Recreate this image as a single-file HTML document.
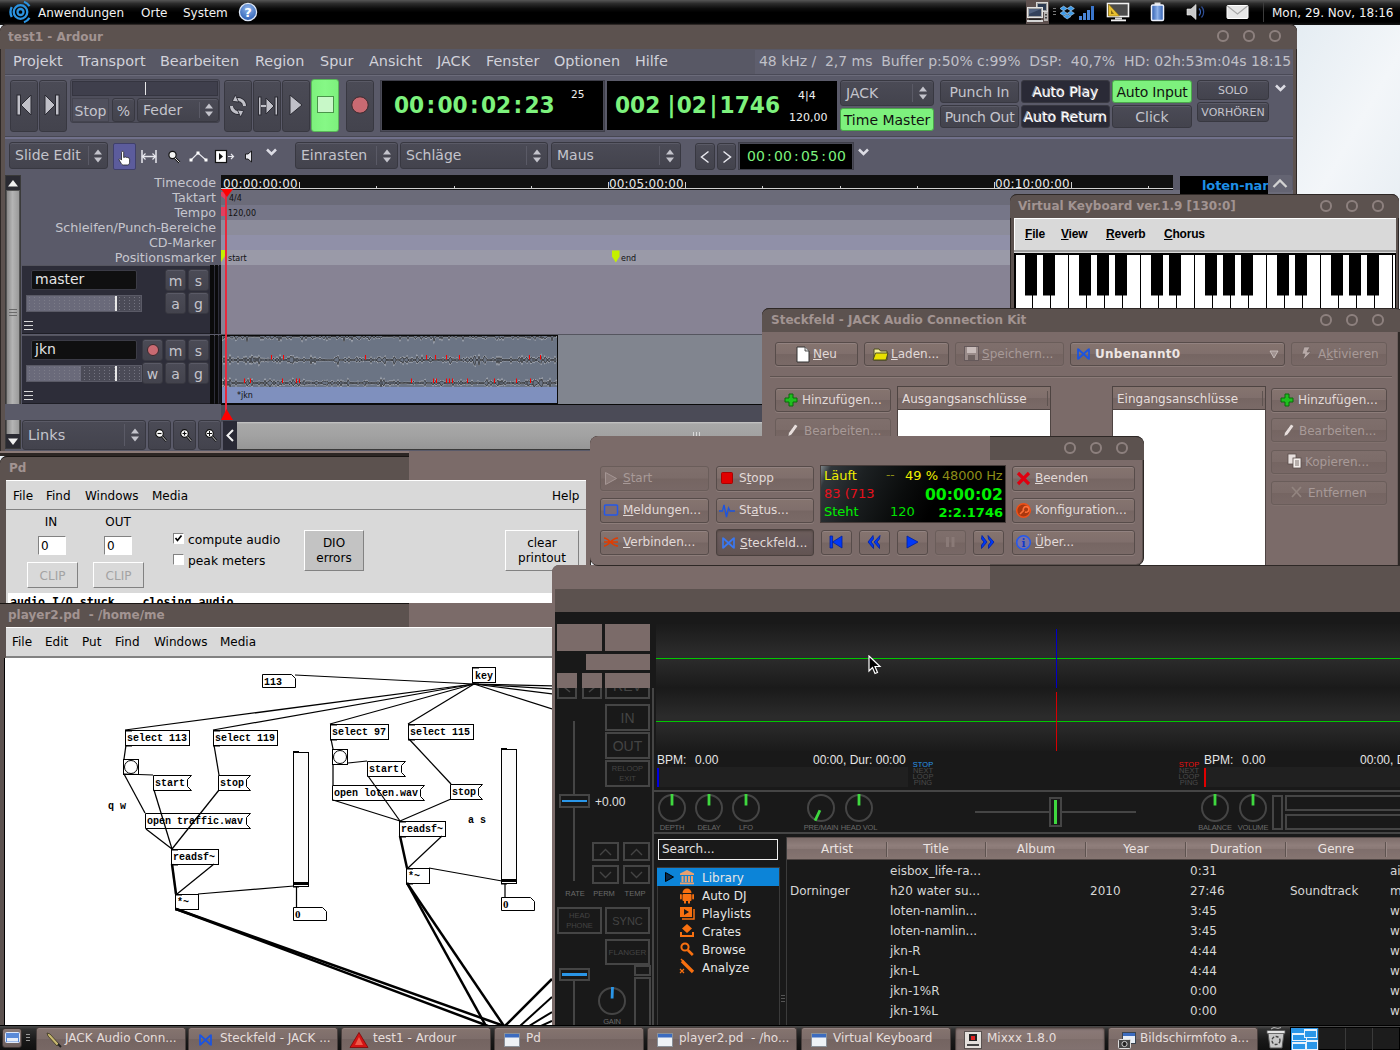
<!DOCTYPE html>
<html lang="de"><head><meta charset="utf-8"><title>Desktop</title><style>
html,body{margin:0;padding:0;}
body{width:1400px;height:1050px;position:relative;overflow:hidden;background:#e9eff4;font-family:"DejaVu Sans","Liberation Sans",sans-serif;font-size:12px;}
div,svg,span.a{position:absolute;box-sizing:border-box;white-space:nowrap;}
u{text-decoration:underline;}
.ab{background:linear-gradient(#4b4b56,#43434d);border:1px solid #383841;border-radius:3px;box-shadow:inset 0 1px 0 #5a5a66;color:#c4c4cc;text-align:center;font-size:14px;}
.ag{background:#7df17d;border:1px solid #4aa84a;border-radius:3px;color:#111;text-align:center;font-size:14px;}
.ad{background:#2a2a36;border:1px solid #383841;border-radius:3px;color:#fff;text-align:center;font-size:14px;text-shadow:-1px -1px 0 #9c9ca6;}
.qb{background:linear-gradient(#85746f 0%,#806f6c 48%,#766663 52%,#7a6a67 100%);border:1px solid #574c4a;border-radius:3px;box-shadow:0 1px 0 #8d7d7a,inset 0 1px 0 #928280;color:#e2dad8;font-size:12px;}
.qd{background:linear-gradient(#7f6f6c 0%,#7c6c69 48%,#756562 52%,#786866 100%);border:1px solid #6a5d5a;border-radius:3px;box-shadow:0 1px 0 #85757299;color:#a89a98;font-size:12px;}
.tk{background:linear-gradient(#85746f 0%,#7d6d6a 50%,#746461 52%,#786865 100%);border:1px solid #4a403e;border-radius:3px;box-shadow:inset 0 1px 0 #938381;color:#dcd4d2;font-size:12px;}
.vk{font-family:"Liberation Sans",sans-serif;font-weight:bold;font-size:12px;color:#000;letter-spacing:-.2px;}
.mx{font-family:"Liberation Sans",sans-serif;}
.mb{border:2px solid #454545;color:#4c4c4c;font-family:"Liberation Sans",sans-serif;text-align:center;}
.pd{border:1px solid #000;font-family:"DejaVu Sans Mono","Liberation Mono",monospace;font-weight:bold;font-size:10px;color:#000;background:#fff;}
</style></head><body>
<div style="left:1290px;top:24px;width:110px;height:175px;background:linear-gradient(120deg,#e4ecf2 0%,#f3f6f9 60%,#e9eff4 100%);"></div>
<div style="left:0px;top:0px;width:1400px;height:24.5px;background:linear-gradient(#565656 0%,#2c2c2c 14%,#0c0c0c 34%,#000 50%,#000 88%,#161616 100%);"></div>
<svg style="left:6.5px;top:0px" width="28" height="24" viewBox="0 0 28 24">
<circle cx="13.5" cy="12" r="3" fill="none" stroke="#2b93e0" stroke-width="2.3"/>
<circle cx="13.5" cy="12" r="6.8" fill="none" stroke="#2b93e0" stroke-width="2.3"/>
<path d="M4.8 7 A10.5 10.5 0 0 0 4.8 17" fill="none" stroke="#2b93e0" stroke-width="2.4"/>
<path d="M17 1.8 A10.8 10.8 0 0 1 22.5 6.2" fill="none" stroke="#2b93e0" stroke-width="2.2"/>
<path d="M22.5 17.8 A10.8 10.8 0 0 1 17 22.2" fill="none" stroke="#2b93e0" stroke-width="2.2"/>
</svg><div style="left:38px;top:0.5px;height:24px;line-height:24px;color:#f2f2f2;font-size:12px;">Anwendungen</div>
<div style="left:141px;top:0.5px;height:24px;line-height:24px;color:#f2f2f2;font-size:12px;">Orte</div>
<div style="left:183px;top:0.5px;height:24px;line-height:24px;color:#f2f2f2;font-size:12px;">System</div>
<svg style="left:238px;top:2px" width="20" height="20" viewBox="0 0 20 20">
<defs><radialGradient id="hg" cx="50%" cy="30%" r="70%"><stop offset="0" stop-color="#8fb4ea"/><stop offset="1" stop-color="#2c5fb5"/></radialGradient></defs>
<circle cx="10" cy="10" r="8.6" fill="url(#hg)" stroke="#dfe8f6" stroke-width="1.3"/>
<text x="10" y="14.8" font-family="DejaVu Sans, Liberation Sans, sans-serif" font-weight="bold" font-size="13" fill="#fff" text-anchor="middle">?</text></svg><svg style="left:1024px;top:0px" width="236" height="24" viewBox="0 0 236 24">
<!-- network monitors -->
<rect x="2" y="0" width="23" height="24" fill="#5d504e"/>
<rect x="12.5" y="2.5" width="11" height="9" fill="#9a9a9a" stroke="#d8d8d8" stroke-width="1"/>
<rect x="14" y="4" width="8" height="6" fill="#2c3a52"/>
<rect x="20" y="12" width="4" height="9" fill="#b8b4b2"/><rect x="21" y="14" width="2" height="1.5" fill="#444"/><rect x="21" y="17" width="2" height="1.5" fill="#444"/>
<rect x="3.5" y="7.5" width="15" height="10" fill="#a4a4a4" stroke="#e4e4e4" stroke-width="1"/>
<rect x="5" y="9" width="12" height="7" fill="#34425c"/><path d="M5 9h12l-12 5z" fill="#51617e"/>
<rect x="5" y="18.5" width="12" height="1.5" fill="#222"/><rect x="3" y="20" width="16" height="2" fill="#d4d4d4"/>
<!-- dots -->
<rect x="29" y="8" width="3" height="1" fill="#777"/><rect x="29" y="11" width="3" height="1" fill="#777"/><rect x="29" y="14" width="3" height="1" fill="#777"/>
<!-- dropbox -->
<path d="M36 8.5l3.6-2.4 3.6 2.4-3.6 2.4zM43.2 8.5l3.6-2.4 3.6 2.4-3.6 2.4zM36 13.3l3.6-2.4 3.6 2.4-3.6 2.4zM43.2 13.3l3.6-2.4 3.6 2.4-3.6 2.4zM39.6 16.6l3.6-2.3 3.6 2.3-3.6 2.3z" fill="#3d9ae8" stroke="#cfe6fb" stroke-width=".5"/>
<!-- signal -->
<rect x="55" y="16" width="3" height="4" fill="#4a86d8"/><rect x="59" y="13" width="3" height="7" fill="#4a86d8"/><rect x="63" y="10" width="3" height="10" fill="#4a86d8"/><rect x="67" y="6" width="3" height="14" fill="#3a76cc"/>
<!-- display -->
<rect x="83.5" y="3.5" width="21" height="13" fill="#4c4c4c" stroke="#f2f2f2" stroke-width="1.6"/>
<path d="M84.5 4l11 12h-11z" fill="#e8c030" stroke="#8a6c10" stroke-width=".6"/><path d="M87 10l3 4h-3z" fill="#8a6c10"/>
<rect x="91" y="17.5" width="7" height="2" fill="#d8d8d8"/><rect x="87" y="19.5" width="15" height="1.8" fill="#f0f0f0"/>
<!-- battery -->
<defs><linearGradient id="bg1" x1="0" x2="1" y1="0" y2="0"><stop offset="0" stop-color="#2c5cb0"/><stop offset=".5" stop-color="#8cb0e8"/><stop offset="1" stop-color="#2c5cb0"/></linearGradient></defs>
<rect x="130.5" y="2.5" width="6" height="3" fill="#e0e0e0"/><rect x="127.5" y="5" width="12" height="15.5" rx="1.2" fill="url(#bg1)" stroke="#eef2fc" stroke-width="1.5"/>
<!-- speaker -->
<path d="M163 9h4l5-4.5v15l-5-4.5h-4z" fill="#c9c9c9" stroke="#eee" stroke-width=".6"/>
<path d="M175 8.5a5 5 0 0 1 0 7" fill="none" stroke="#3c66b8" stroke-width="1.4"/><path d="M177.5 6.5a8 8 0 0 1 0 11" fill="none" stroke="#2c4c94" stroke-width="1.2"/>
<!-- mail -->
<rect x="203" y="5.5" width="21" height="13" rx="1" fill="#e6e6e6" stroke="#fff" stroke-width="1"/><path d="M203.5 6l10 8 10-8" fill="none" stroke="#a8a8a8" stroke-width="1.2"/>
</svg><div style="left:1263px;top:2px;width:1px;height:20px;background:#3c3c3c;"></div>
<div style="left:1272px;top:0.5px;height:24px;line-height:24px;color:#f2f2f2;font-size:12px;">Mon, 29. Nov, 18:16</div>
<div style="left:0px;top:24px;width:1297px;height:432px;background:#5c524f;border-radius:7px 7px 0 0;border:1px solid #2e2826;"></div>
<div style="left:0px;top:24px;width:1297px;height:25px;background:#5c524f;border-radius:7px 7px 0 0;border-top:1px solid #2e2826;box-sizing:border-box;"></div>
<div style="left:1217.25px;top:30.25px;width:11.5px;height:11.5px;border:2px solid #8d807e;border-radius:50%;"></div>
<div style="left:1243.25px;top:30.25px;width:11.5px;height:11.5px;border:2px solid #8d807e;border-radius:50%;"></div>
<div style="left:1269.25px;top:30.25px;width:11.5px;height:11.5px;border:2px solid #8d807e;border-radius:50%;"></div>
<div style="left:8px;top:26px;height:22px;line-height:22px;color:#a29492;font-weight:bold;font-size:12px;">test1 - Ardour</div>
<div style="left:5px;top:49px;width:1288px;height:402px;background:#5a5a69;"></div>
<div style="left:0px;top:451px;width:1297px;height:2px;background:#8b7a77;"></div>
<div style="left:0px;top:453px;width:1297px;height:3px;background:#2c2624;"></div>
<div style="left:5px;top:49px;width:1288px;height:25px;background:#585865;"></div>
<div style="left:13px;top:49px;height:25px;line-height:25px;color:#d2d2da;font-size:14.4px;">Projekt</div>
<div style="left:78px;top:49px;height:25px;line-height:25px;color:#d2d2da;font-size:14.4px;">Transport</div>
<div style="left:160px;top:49px;height:25px;line-height:25px;color:#d2d2da;font-size:14.4px;">Bearbeiten</div>
<div style="left:255px;top:49px;height:25px;line-height:25px;color:#d2d2da;font-size:14.4px;">Region</div>
<div style="left:320px;top:49px;height:25px;line-height:25px;color:#d2d2da;font-size:14.4px;">Spur</div>
<div style="left:369px;top:49px;height:25px;line-height:25px;color:#d2d2da;font-size:14.4px;">Ansicht</div>
<div style="left:437px;top:49px;height:25px;line-height:25px;color:#d2d2da;font-size:14.4px;">JACK</div>
<div style="left:486px;top:49px;height:25px;line-height:25px;color:#d2d2da;font-size:14.4px;">Fenster</div>
<div style="left:554px;top:49px;height:25px;line-height:25px;color:#d2d2da;font-size:14.4px;">Optionen</div>
<div style="left:635px;top:49px;height:25px;line-height:25px;color:#d2d2da;font-size:14.4px;">Hilfe</div>
<div style="left:755px;top:50px;width:538px;height:24px;background:#5e5e6d;"></div>
<div style="left:759px;top:49px;height:25px;line-height:25px;color:#c0c0c8;font-size:14px;white-space:pre;letter-spacing:-0.035px;">48 kHz /  2,7 ms  Buffer p:50% c:99%  DSP:  40,7%  HD: 02h:53m:04s 18:15</div>
<div style="left:5px;top:74px;width:1288px;height:1px;background:#4a4a57;"></div>
<div style="left:5px;top:75px;width:1288px;height:1px;background:#6b6b7a;"></div>
<div class="ab" style="left:10px;top:79.5px;width:28px;height:52px;"><svg style="left:2.5px;top:12.5px" width="20" height="24" viewBox="0 0 20 24"><rect x="3" y="2" width="3.5" height="20" fill="#c0c0c8" stroke="#2a2a32" stroke-width="1"/><path d="M17 2v20L7 12z" fill="#c0c0c8" stroke="#2a2a32" stroke-width="1"/></svg></div>
<div class="ab" style="left:39px;top:79.5px;width:28px;height:52px;"><svg style="left:3px;top:12.5px" width="20" height="24" viewBox="0 0 20 24"><rect x="12.5" y="2" width="3.5" height="20" fill="#c0c0c8" stroke="#2a2a32" stroke-width="1"/><path d="M2 2v20l10-10z" fill="#c0c0c8" stroke="#2a2a32" stroke-width="1"/></svg></div>
<div style="left:70px;top:79px;width:150px;height:44px;background:#4e4e5b;border:1px solid #40404b;border-radius:3px;"></div>
<div style="left:72px;top:81px;width:146px;height:15px;background:#3f3f4c;border:1px solid #353540;"></div>
<div style="left:145px;top:82px;width:1px;height:13px;background:#e8e8e8;"></div>
<div style="left:72px;top:98px;height:24px;line-height:24px;width:37px;text-align:center;color:#c4c4cc;font-size:14px;background:#50505d;border:1px solid #44444f;">Stop</div>
<div class="ab" style="left:112px;top:98px;height:24px;line-height:24px;width:23px;">%</div>
<div class="ab" style="left:137px;top:98px;width:82px;height:24px;"></div>
<div style="left:143px;top:98px;height:24px;line-height:24px;color:#c4c4cc;font-size:14px;">Feder</div>
<div style="left:199px;top:102px;width:1px;height:16px;background:#5a5a66;"></div>
<svg style="left:204.0px;top:102.0px" width="10" height="16" viewBox="0 0 10 16"><path d="M1 6.5L5 1.5L9 6.5zM1 9.5L5 14.5L9 9.5z" fill="#c4c4cc"/></svg><div class="ab" style="left:224px;top:79.5px;width:28px;height:52px;"><svg style="left:3px;top:13px" width="20" height="24" viewBox="0 0 20 24"><g fill="none" stroke="#2a2a32" stroke-width="4.6"><path d="M16.5 12a6.5 6.5 0 0 0-9.5-5.8"/><path d="M3.5 12a6.5 6.5 0 0 0 9.5 5.8"/></g><g fill="none" stroke="#c0c0c8" stroke-width="3"><path d="M16.5 12a6.5 6.5 0 0 0-9.5-5.8"/><path d="M3.5 12a6.5 6.5 0 0 0 9.5 5.8"/></g><path d="M9.5 1.5v8l-5.5-3.5z" fill="#c0c0c8" stroke="#2a2a32" stroke-width=".8" transform="rotate(-25 7 6)"/><path d="M10.5 22.5v-8l5.5 3.5z" fill="#c0c0c8" stroke="#2a2a32" stroke-width=".8" transform="rotate(-25 13 18)"/></svg></div>
<div class="ab" style="left:253px;top:79.5px;width:28px;height:52px;"><svg style="left:3px;top:14px" width="22" height="22" viewBox="0 0 22 22"><rect x="1.5" y="2" width="2.5" height="18" fill="#c0c0c8" stroke="#2a2a32" stroke-width="1"/><rect x="18" y="2" width="2.5" height="18" fill="#c0c0c8" stroke="#2a2a32" stroke-width="1"/><path d="M9 3v16l8-8z" fill="#c0c0c8" stroke="#2a2a32" stroke-width="1"/><rect x="4" y="10" width="5" height="2" fill="#c0c0c8"/></svg></div>
<div class="ab" style="left:282px;top:79.5px;width:28px;height:52px;"><svg style="left:3.5px;top:12.5px" width="18" height="24" viewBox="0 0 18 24"><path d="M3 2v20l12-10z" fill="#c0c0c8" stroke="#2a2a32" stroke-width="1"/></svg></div>
<div style="left:311px;top:79px;width:28px;height:53px;background:linear-gradient(90deg,#7df17d,#86f886 50%,#7df17d);border:1px solid #58b858;border-radius:3px;"><div style="left:5px;top:16px;width:17px;height:17px;background:#c8f8c8;border:1px solid #4a944a;"></div></div>
<div class="ab" style="left:346px;top:79.5px;width:28px;height:52px;"><svg style="left:2.5px;top:14px" width="20" height="20" viewBox="0 0 20 20"><circle cx="10" cy="10" r="8.2" fill="#c96a72" stroke="#3a2a2e" stroke-width="1"/></svg></div>
<div style="left:380px;top:79.5px;width:225px;height:52px;background:#4a4a56;border:1px solid #3e3e49;"></div>
<div style="left:382px;top:81px;width:221px;height:49px;background:#000;"></div>
<div style="left:394px;top:81px;height:48px;line-height:48px;color:#7df27d;font-weight:bold;font-size:23px;transform:scaleX(.945);transform-origin:0 50%;white-space:pre;">00<span style="margin:0 2.4px">:</span>00<span style="margin:0 2.4px">:</span>02<span style="margin:0 2.4px">:</span>23</div>
<div style="left:571px;top:87.5px;height:13px;line-height:13px;color:#f0f0f0;font-size:10.5px;">25</div>
<div style="left:607px;top:81px;width:229.5px;height:49px;background:#000;"></div>
<div style="left:614.5px;top:81px;height:48px;line-height:48px;color:#7df27d;font-weight:bold;font-size:23px;transform:scaleX(.945);transform-origin:0 50%;white-space:pre;word-spacing:-.4px;">002 |<span style="margin-left:1.3px">02</span><span style="margin:0 2.3px 0 2.6px">|</span>1746</div>
<div style="left:798px;top:89px;height:14px;line-height:14px;color:#f0f0f0;font-size:11px;">4|4</div>
<div style="left:789px;top:111px;height:14px;line-height:14px;color:#f0f0f0;font-size:11px;">120,00</div>
<div class="ab" style="left:840px;top:79.5px;width:94px;height:26px;"></div>
<div style="left:846px;top:79.5px;height:26px;line-height:26px;color:#c4c4cc;font-size:14px;">JACK</div>
<div style="left:912px;top:83.5px;width:1px;height:18px;background:#5a5a66;"></div>
<svg style="left:918.0px;top:84.5px" width="10" height="16" viewBox="0 0 10 16"><path d="M1 6.5L5 1.5L9 6.5zM1 9.5L5 14.5L9 9.5z" fill="#c4c4cc"/></svg><div class="ag" style="left:840px;top:107.5px;height:23.5px;line-height:23.5px;width:94px;">Time Master</div>
<div class="ab" style="left:940px;top:80px;height:23px;line-height:23px;width:79px;">Punch In</div>
<div class="ab" style="left:940px;top:105px;height:23px;line-height:23px;width:79px;letter-spacing:-0.3px;">Punch Out</div>
<div class="ad" style="left:1021px;top:80px;height:23px;line-height:23px;width:89px;">Auto Play</div>
<div class="ad" style="left:1021px;top:105px;height:23px;line-height:23px;width:89px;">Auto Return</div>
<div class="ag" style="left:1112px;top:80px;height:23px;line-height:23px;width:80px;letter-spacing:-0.2px;">Auto Input</div>
<div class="ab" style="left:1112px;top:105px;height:23px;line-height:23px;width:80px;">Click</div>
<div class="ab" style="left:1197px;top:80px;height:20px;line-height:20px;width:72px;font-size:11px;">SOLO</div>
<div class="ab" style="left:1197px;top:102px;height:20px;line-height:20px;width:72px;font-size:11px;">VORHÖREN</div>
<svg style="left:1275px;top:84px" width="11" height="8" viewBox="0 0 11 8"><path d="M1 1.5L5.5 6L10 1.5" fill="none" stroke="#dcdce4" stroke-width="2.5"/></svg><div style="left:5px;top:136px;width:1288px;height:1px;background:#474752;"></div>
<div style="left:5px;top:137px;width:1288px;height:1.5px;background:#70708a;"></div>
<div class="ab" style="left:9px;top:142px;width:99px;height:27px;"></div>
<div style="left:15px;top:142px;height:27px;line-height:27px;color:#c4c4cc;font-size:14px;">Slide Edit</div>
<div style="left:88px;top:146px;width:1px;height:19px;background:#5a5a66;"></div>
<svg style="left:93.0px;top:147.5px" width="10" height="16" viewBox="0 0 10 16"><path d="M1 6.5L5 1.5L9 6.5zM1 9.5L5 14.5L9 9.5z" fill="#c4c4cc"/></svg><div style="left:113px;top:143px;width:23px;height:27px;background:#5c5c9c;border:1px solid #40406a;border-radius:2px;"></div>
<svg style="left:113px;top:143px" width="150" height="27" viewBox="0 0 150 27">
<path d="M8.5 9.5c0-1.6 2.2-1.6 2.2 0v5l1-.3c.8-.4 1.4-.2 1.7.3.9-.4 1.5 0 1.7.5.9-.2 1.5.3 1.5 1.2v3c0 1.5-.8 2.8-2.2 2.8h-4c-1 0-1.6-.6-2.2-1.6l-2-3.3c-.6-1 .6-1.8 1.4-1l.9 1z" fill="#fff" stroke="#222" stroke-width=".8"/>
<g stroke="#e8e8ee" stroke-width="1.5" fill="none"><path d="M29 7v13M43 7v13M29 13.5h14"/><path d="M32.5 10.5l-3 3 3 3M39.5 10.5l3 3-3 3" stroke-width="1.2"/></g>
<circle cx="59.5" cy="12" r="3.6" fill="#f4f4f4" stroke="#111" stroke-width="1.2"/><path d="M62 15l4.5 4.5" stroke="#111" stroke-width="2.4"/><path d="M62 15l4.5 4.5" stroke="#ddd" stroke-width="1"/>
<path d="M78 17l7-7 8 7" fill="none" stroke="#e8e8ee" stroke-width="1.2"/><rect x="76.5" y="15.5" width="3" height="3" fill="#fff"/><rect x="83.5" y="8.5" width="3" height="3" fill="#fff"/><rect x="91.5" y="15.5" width="3" height="3" fill="#fff"/>
<rect x="102.5" y="7.5" width="11" height="12" fill="#fff" stroke="#111" stroke-width="1.2"/><path d="M106 10v7l4-3.5z" fill="#111"/><path d="M115 13.5h5M118 11l2.5 2.5-2.5 2.5" stroke="#e8e8ee" stroke-width="1.2" fill="none"/>
<path d="M132.5 11h2.5l3.5-3v11l-3.5-3h-2.5z" fill="#e8e8ee" stroke="#111" stroke-width=".9"/>
</svg><svg style="left:266px;top:148px" width="11" height="8" viewBox="0 0 11 8"><path d="M1 1.5L5.5 6L10 1.5" fill="none" stroke="#dcdce4" stroke-width="2.5"/></svg><div class="ab" style="left:295px;top:142px;width:103px;height:27px;"></div>
<div style="left:301px;top:142px;height:27px;line-height:27px;color:#c4c4cc;font-size:14px;">Einrasten</div>
<div style="left:376px;top:146px;width:1px;height:19px;background:#5a5a66;"></div>
<svg style="left:382.0px;top:147.5px" width="10" height="16" viewBox="0 0 10 16"><path d="M1 6.5L5 1.5L9 6.5zM1 9.5L5 14.5L9 9.5z" fill="#c4c4cc"/></svg><div class="ab" style="left:400px;top:142px;width:148px;height:27px;"></div>
<div style="left:406px;top:142px;height:27px;line-height:27px;color:#c4c4cc;font-size:14px;">Schläge</div>
<div style="left:526px;top:146px;width:1px;height:19px;background:#5a5a66;"></div>
<svg style="left:532.0px;top:147.5px" width="10" height="16" viewBox="0 0 10 16"><path d="M1 6.5L5 1.5L9 6.5zM1 9.5L5 14.5L9 9.5z" fill="#c4c4cc"/></svg><div class="ab" style="left:551px;top:142px;width:130px;height:27px;"></div>
<div style="left:557px;top:142px;height:27px;line-height:27px;color:#c4c4cc;font-size:14px;">Maus</div>
<div style="left:659px;top:146px;width:1px;height:19px;background:#5a5a66;"></div>
<svg style="left:665.0px;top:147.5px" width="10" height="16" viewBox="0 0 10 16"><path d="M1 6.5L5 1.5L9 6.5zM1 9.5L5 14.5L9 9.5z" fill="#c4c4cc"/></svg><div class="ab" style="left:695px;top:143px;width:20px;height:27px;"><svg style="left:3px;top:6px" width="12" height="14" viewBox="0 0 12 14"><path d="M9.5 1.5L2.5 7l7 5.5" fill="none" stroke="#e8e8ee" stroke-width="1.5"/></svg></div>
<div class="ab" style="left:717px;top:143px;width:19px;height:27px;"><svg style="left:3px;top:6px" width="12" height="14" viewBox="0 0 12 14"><path d="M2.5 1.5L9.5 7l-7 5.5" fill="none" stroke="#e8e8ee" stroke-width="1.5"/></svg></div>
<div style="left:738px;top:142px;width:116px;height:28px;background:#4a4a56;border:1px solid #3e3e49;"></div>
<div style="left:740px;top:144px;width:112px;height:25px;background:#000;"></div>
<div style="left:747px;top:144px;height:25px;line-height:25px;color:#7df27d;font-size:14px;word-spacing:-2.2px;">00 : 00 : 05 : 00</div>
<svg style="left:858px;top:148px" width="11" height="8" viewBox="0 0 11 8"><path d="M1 1.5L5.5 6L10 1.5" fill="none" stroke="#dcdce4" stroke-width="2.5"/></svg><div style="left:5px;top:175px;width:16px;height:274px;background:#6e6e6e;border:1px solid #3a3a3a;"></div>
<div style="left:6px;top:190px;width:14px;height:245px;background:linear-gradient(90deg,#8a8a8a,#b4b4b4 45%,#9a9a9a);border:1px solid #555;"></div>
<div style="left:6px;top:176px;width:14px;height:14px;background:#2a2a32;"><svg style="left:2px;top:3px" width="10" height="8" viewBox="0 0 10 8"><path d="M0 7.5L5 1l5 6.5z" fill="#f0f0f0"/></svg></div>
<div style="left:6px;top:434px;width:14px;height:14px;background:#2a2a32;"><svg style="left:2px;top:4px" width="10" height="8" viewBox="0 0 10 8"><path d="M0 .5L5 7l5-6.5z" fill="#f0f0f0"/></svg></div>
<div style="left:9px;top:309px;width:8px;height:1px;background:#6a6a6a;"></div>
<div style="left:9px;top:312px;width:8px;height:1px;background:#6a6a6a;"></div>
<div style="left:9px;top:315px;width:8px;height:1px;background:#6a6a6a;"></div>
<div style="left:22px;top:175px;height:15px;line-height:15px;width:194px;text-align:right;color:#c6c6ce;font-size:12.7px;">Timecode</div>
<div style="left:22px;top:190px;height:15px;line-height:15px;width:194px;text-align:right;color:#c6c6ce;font-size:12.7px;">Taktart</div>
<div style="left:22px;top:205px;height:15px;line-height:15px;width:194px;text-align:right;color:#c6c6ce;font-size:12.7px;">Tempo</div>
<div style="left:22px;top:220px;height:15px;line-height:15px;width:194px;text-align:right;color:#c6c6ce;font-size:12.7px;">Schleifen/Punch-Bereiche</div>
<div style="left:22px;top:235px;height:15px;line-height:15px;width:194px;text-align:right;color:#c6c6ce;font-size:12.7px;">CD-Marker</div>
<div style="left:22px;top:250px;height:15px;line-height:15px;width:194px;text-align:right;color:#c6c6ce;font-size:12.7px;">Positionsmarker</div>
<div style="left:221px;top:175px;width:952px;height:15px;background:#101010;"></div>
<div style="left:221px;top:188px;width:952px;height:1px;background:#d0d0d0;"></div>
<div style="left:223px;top:178px;height:13px;line-height:13px;color:#e8e8e8;font-size:12px;letter-spacing:.15px;">00:00:00:00</div>
<div style="left:608px;top:182px;width:1px;height:7px;background:#d0d0d0;"></div>
<div style="left:609px;top:178px;height:13px;line-height:13px;color:#e8e8e8;font-size:12px;letter-spacing:.15px;">00:05:00:00</div>
<div style="left:994px;top:182px;width:1px;height:7px;background:#d0d0d0;"></div>
<div style="left:995px;top:178px;height:13px;line-height:13px;color:#e8e8e8;font-size:12px;letter-spacing:.15px;">00:10:00:00</div>
<div style="left:299px;top:182px;width:1px;height:6px;background:#d0d0d0;"></div>
<div style="left:685px;top:182px;width:1px;height:6px;background:#d0d0d0;"></div>
<div style="left:1071px;top:182px;width:1px;height:6px;background:#d0d0d0;"></div>
<div style="left:299px;top:186px;width:1px;height:3px;background:#d0d0d0;"></div>
<div style="left:376px;top:186px;width:1px;height:3px;background:#d0d0d0;"></div>
<div style="left:454px;top:186px;width:1px;height:3px;background:#d0d0d0;"></div>
<div style="left:531px;top:186px;width:1px;height:3px;background:#d0d0d0;"></div>
<div style="left:685px;top:186px;width:1px;height:3px;background:#d0d0d0;"></div>
<div style="left:762px;top:186px;width:1px;height:3px;background:#d0d0d0;"></div>
<div style="left:840px;top:186px;width:1px;height:3px;background:#d0d0d0;"></div>
<div style="left:917px;top:186px;width:1px;height:3px;background:#d0d0d0;"></div>
<div style="left:1071px;top:186px;width:1px;height:3px;background:#d0d0d0;"></div>
<div style="left:1148px;top:186px;width:1px;height:3px;background:#d0d0d0;"></div>
<div style="left:221px;top:190px;width:1072px;height:15px;background:#6b6b79;"></div>
<div style="left:221px;top:205px;width:1072px;height:15px;background:#767688;"></div>
<div style="left:221px;top:220px;width:1072px;height:15px;background:#8c8c9b;"></div>
<div style="left:221px;top:235px;width:1072px;height:15px;background:#9090a8;"></div>
<div style="left:221px;top:250px;width:1072px;height:15px;background:#9a9aa8;"></div>
<div style="left:229px;top:192px;height:13px;line-height:13px;color:#111;font-size:8px;">4/4</div>
<div style="left:228px;top:207px;height:13px;line-height:13px;color:#111;font-size:8px;">120,00</div>
<div style="left:228px;top:252px;height:13px;line-height:13px;color:#111;font-size:8px;">start</div>
<div style="left:621px;top:252px;height:13px;line-height:13px;color:#111;font-size:8px;">end</div>
<svg style="left:219px;top:188px" width="420" height="80" viewBox="0 0 420 80"><path d="M2 4h5v8l-5-4z" fill="#e04060"/><path d="M2 19h5v9h-5z" fill="#e04060"/><path d="M2 62h4v6l-4 6z" fill="#c4f000"/><path d="M393 62.5h7.5v6l-3.7 6-3.8-6z" fill="#c4f000"/></svg><div style="left:221px;top:265px;width:1072px;height:69px;background:#878394;"></div>
<div style="left:221px;top:334px;width:1072px;height:1px;background:#55555f;"></div>
<div style="left:221px;top:335px;width:1072px;height:69px;background:#81858f;"></div>
<div style="left:221px;top:404px;width:1072px;height:18px;background:#4b4b57;"></div>
<div style="left:221px;top:403.5px;width:1072px;height:1px;background:#0a0a0a;"></div>
<div style="left:5px;top:404px;width:216px;height:16px;background:#5a5a68;"></div>
<div style="left:22px;top:265px;width:197px;height:69px;background:#2d2d39;border-top:1px solid #55555f;border-bottom:1px solid #1e1e26;"></div>
<div style="left:210px;top:265px;width:4px;height:69px;background:#0a0a0a;"></div>
<div style="left:215px;top:265px;width:3px;height:69px;background:#0a0a0a;"></div>
<div style="left:219px;top:265px;width:2px;height:69px;background:#14141a;"></div>
<div style="left:24px;top:321px;width:9px;height:1px;background:#d8d8d8;"></div>
<div style="left:24px;top:325px;width:9px;height:1px;background:#d8d8d8;"></div>
<div style="left:24px;top:329px;width:9px;height:1px;background:#d8d8d8;"></div>
<div style="left:22px;top:335px;width:197px;height:69px;background:#2d2d39;border-top:1px solid #55555f;border-bottom:1px solid #1e1e26;"></div>
<div style="left:210px;top:335px;width:4px;height:69px;background:#0a0a0a;"></div>
<div style="left:215px;top:335px;width:3px;height:69px;background:#0a0a0a;"></div>
<div style="left:219px;top:335px;width:2px;height:69px;background:#14141a;"></div>
<div style="left:24px;top:391px;width:9px;height:1px;background:#d8d8d8;"></div>
<div style="left:24px;top:395px;width:9px;height:1px;background:#d8d8d8;"></div>
<div style="left:24px;top:399px;width:9px;height:1px;background:#d8d8d8;"></div>
<div style="left:31px;top:270px;width:106px;height:20px;background:#101010;border:1px solid #3c3c46;border-radius:2px;"></div>
<div style="left:35px;top:270px;height:19px;line-height:19px;color:#e4e4e4;font-size:14px;">master</div>
<div style="left:31px;top:340px;width:106px;height:20px;background:#101010;border:1px solid #3c3c46;border-radius:2px;"></div>
<div style="left:35px;top:340px;height:19px;line-height:19px;color:#e4e4e4;font-size:14px;">jkn</div>
<div style="left:26px;top:295px;width:116px;height:17px;background:#4b4b57;border:1px solid #5a5a66;"></div>
<div style="left:27px;top:296px;width:88px;height:15px;background:#6a6a7a;"></div>
<div style="left:27px;top:296px;width:114px;height:15px;background-image:radial-gradient(circle,#80808c 0.6px,transparent 0.9px);background-size:5px 3px;opacity:.8;"></div>
<div style="left:115px;top:296px;width:1.5px;height:15px;background:#e8e8e8;"></div>
<div style="left:26px;top:365px;width:116px;height:17px;background:#4b4b57;border:1px solid #5a5a66;"></div>
<div style="left:27px;top:366px;width:54px;height:15px;background:#6a6a7a;"></div>
<div style="left:27px;top:366px;width:114px;height:15px;background-image:radial-gradient(circle,#80808c 0.6px,transparent 0.9px);background-size:5px 3px;opacity:.8;"></div>
<div style="left:115px;top:366px;width:1.5px;height:15px;background:#e8e8e8;"></div>
<div class="ab" style="left:165px;top:269px;height:22px;line-height:22px;width:21px;font-size:14px;">m</div>
<div class="ab" style="left:188px;top:269px;height:22px;line-height:22px;width:21px;font-size:14px;">s</div>
<div class="ab" style="left:165px;top:292px;height:22px;line-height:22px;width:21px;font-size:14px;">a</div>
<div class="ab" style="left:188px;top:292px;height:22px;line-height:22px;width:21px;font-size:14px;">g</div>
<div class="ab" style="left:165px;top:339px;height:22px;line-height:22px;width:21px;font-size:14px;">m</div>
<div class="ab" style="left:188px;top:339px;height:22px;line-height:22px;width:21px;font-size:14px;">s</div>
<div class="ab" style="left:142px;top:362px;height:22px;line-height:22px;width:21px;font-size:14px;">w</div>
<div class="ab" style="left:165px;top:362px;height:22px;line-height:22px;width:21px;font-size:14px;">a</div>
<div class="ab" style="left:188px;top:362px;height:22px;line-height:22px;width:21px;font-size:14px;">g</div>
<div class="ab" style="left:142px;top:339px;width:21px;height:22px;"><div style="left:4px;top:4px;width:12px;height:12px;border-radius:50%;background:#c96a72;border:1px solid #3a2a2e;"></div></div>
<div style="left:221px;top:335px;width:337px;height:69px;background:#6b7484;border:1px solid #0a0a0a;"></div>
<div style="left:222px;top:387px;width:335px;height:16px;background:#7f90be;"></div>
<div style="left:237px;top:389px;height:13px;line-height:13px;color:#111;font-size:8px;">*jkn</div>
<svg style="left:222px;top:336px" width="335" height="51" viewBox="222 336 335 51"><path d="M223 334.1L224 334.6L225 336.1L226 332.6L227 336.4L228 336.3L229 336.4L230 336.0L231 334.7L232 334.6L233 334.9L234 336.3L235 336.2L236 333.9L237 334.8L238 336.0L239 336.1L240 336.0L241 336.2L242 334.2L243 334.5L244 336.2L245 336.1L246 336.2L247 332.7L248 336.2L249 336.0L250 336.0L251 336.0L252 336.3L253 336.4L254 336.0L255 336.2L256 336.4L257 336.3L258 336.2L259 336.1L260 336.4L261 334.4L262 336.1L263 334.1L264 335.2L265 336.3L266 336.2L267 334.5L268 334.3L269 334.6L270 336.2L271 334.0L272 334.4L273 333.6L274 336.3L275 336.2L276 336.1L277 334.4L278 336.3L279 333.3L280 336.3L281 334.0L282 336.3L283 336.4L284 336.2L285 336.0L286 336.2L287 334.3L288 335.1L289 334.6L290 336.0L291 334.8L292 336.3L293 336.1L294 336.0L295 336.0L296 336.3L297 336.3L298 336.1L299 336.3L300 336.0L301 334.5L302 333.5L303 336.1L304 336.1L305 336.3L306 334.0L307 336.2L308 336.1L309 336.3L310 336.4L311 336.2L312 334.9L313 334.0L314 336.0L315 334.6L316 336.4L317 336.3L318 336.3L319 336.0L320 334.9L321 336.2L322 336.3L323 334.9L324 333.9L325 336.1L326 336.3L327 334.1L328 334.8L329 336.2L330 333.3L331 336.4L332 336.3L333 336.0L334 336.1L335 336.3L336 336.1L337 334.5L338 334.0L339 336.4L340 336.1L341 336.1L342 334.6L343 336.1L344 332.4L345 336.2L346 336.2L347 335.2L348 336.2L349 336.3L350 334.1L351 336.1L352 333.0L353 336.2L354 336.3L355 336.3L356 336.0L357 334.4L358 334.5L359 334.2L360 334.3L361 336.1L362 336.0L363 336.2L364 334.9L365 336.4L366 336.2L367 334.3L368 336.1L369 334.0L370 334.2L371 336.1L372 336.0L373 336.2L374 335.0L375 336.3L376 336.3L377 334.2L378 334.6L379 336.1L380 334.8L381 334.4L382 336.1L383 336.2L384 336.1L385 336.3L386 336.3L387 336.0L388 336.3L389 336.3L390 336.2L391 336.2L392 336.1L393 336.1L394 335.2L395 336.0L396 336.0L397 336.2L398 336.3L399 336.2L400 333.1L401 336.0L402 336.0L403 336.1L404 336.1L405 336.1L406 336.1L407 336.1L408 334.3L409 336.3L410 336.2L411 336.1L412 336.1L413 336.0L414 336.1L415 334.9L416 335.1L417 336.2L418 336.3L419 336.1L420 336.3L421 334.2L422 334.9L423 336.1L424 336.1L425 336.1L426 334.4L427 336.2L428 336.1L429 336.3L430 336.2L431 334.3L432 335.1L433 336.3L434 332.9L435 335.2L436 336.0L437 336.1L438 336.3L439 336.2L440 334.1L441 336.3L442 334.4L443 336.4L444 336.3L445 336.0L446 336.1L447 336.4L448 336.4L449 334.6L450 336.4L451 336.4L452 335.1L453 336.1L454 336.1L455 336.0L456 335.1L457 336.2L458 336.2L459 336.2L460 336.2L461 336.1L462 336.3L463 334.0L464 336.4L465 336.2L466 336.4L467 336.3L468 336.0L469 336.3L470 335.2L471 336.3L472 336.1L473 334.6L474 336.3L475 336.0L476 334.4L477 336.1L478 336.2L479 336.3L480 336.2L481 336.2L482 336.1L483 334.7L484 336.2L485 334.0L486 335.1L487 336.0L488 336.1L489 336.1L490 336.2L491 336.1L492 336.0L493 336.2L494 336.3L495 336.2L496 334.7L497 333.5L498 335.1L499 336.2L500 334.1L501 334.1L502 336.1L503 334.0L504 336.0L505 336.2L506 336.1L507 336.3L508 336.1L509 336.2L510 336.2L511 336.2L512 334.3L513 334.8L514 336.0L515 336.2L516 336.1L517 336.1L518 334.5L519 336.0L520 336.0L521 336.2L522 336.0L523 336.0L524 336.2L525 336.1L526 334.6L527 336.2L528 334.9L529 336.3L530 334.5L531 336.2L532 336.1L533 336.1L534 333.9L535 333.3L536 336.2L537 336.3L538 336.2L539 336.0L540 334.5L541 336.3L542 334.6L543 336.1L544 334.7L545 334.5L546 334.1L547 336.0L548 336.2L549 336.3L550 336.2L551 336.3L552 332.4L553 336.0L554 336.2L555 336.3L556 336.2L556 336.7L555 336.7L554 336.8L553 336.9L552 341.2L551 336.7L550 336.8L549 336.7L548 336.9L547 336.9L546 338.2L545 339.1L544 338.6L543 337.0L542 338.9L541 336.6L540 338.4L539 337.2L538 336.8L537 336.7L536 336.8L535 339.6L534 338.5L533 336.8L532 336.9L531 336.8L530 338.8L529 336.8L528 338.6L527 336.7L526 337.8L525 336.9L524 336.9L523 337.1L522 337.0L521 336.7L520 337.1L519 336.9L518 338.6L517 336.8L516 337.1L515 336.8L514 337.0L513 338.7L512 337.8L511 336.7L510 336.7L509 336.9L508 336.9L507 336.7L506 337.0L505 336.9L504 336.9L503 339.2L502 337.0L501 338.0L500 339.2L499 336.7L498 337.7L497 339.6L496 338.7L495 336.9L494 336.6L493 336.9L492 337.0L491 337.0L490 337.0L489 336.8L488 337.1L487 337.1L486 338.4L485 338.6L484 336.8L483 338.0L482 336.8L481 336.7L480 336.7L479 336.7L478 336.9L477 337.0L476 338.6L475 337.0L474 336.7L473 338.0L472 337.1L471 336.7L470 337.7L469 336.7L468 336.8L467 336.7L466 336.6L465 336.8L464 336.6L463 339.7L462 336.8L461 337.0L460 336.8L459 336.7L458 336.7L457 336.8L456 338.4L455 337.1L454 336.8L453 337.0L452 337.4L451 336.6L450 336.6L449 338.9L448 336.6L447 336.6L446 336.8L445 336.9L444 336.7L443 336.7L442 339.3L441 336.7L440 338.8L439 336.7L438 336.6L437 336.8L436 337.0L435 338.1L434 341.3L433 336.6L432 337.8L431 339.1L430 336.8L429 336.6L428 336.8L427 336.9L426 338.0L425 337.0L424 336.8L423 336.8L422 338.7L421 339.5L420 336.7L419 336.9L418 336.7L417 336.8L416 338.3L415 338.6L414 336.9L413 337.1L412 336.7L411 336.9L410 336.7L409 336.7L408 339.4L407 336.8L406 337.0L405 337.0L404 336.8L403 337.0L402 337.1L401 337.0L400 339.7L399 336.8L398 336.7L397 336.8L396 337.0L395 337.1L394 337.6L393 336.8L392 337.0L391 336.7L390 336.7L389 336.7L388 336.7L387 337.1L386 336.7L385 336.7L384 336.9L383 336.8L382 337.0L381 338.2L380 338.2L379 336.9L378 337.7L377 337.9L376 336.6L375 336.7L374 338.4L373 336.7L372 336.9L371 336.9L370 339.4L369 339.9L368 337.0L367 337.9L366 336.8L365 336.7L364 338.2L363 336.8L362 337.1L361 337.0L360 339.3L359 339.5L358 339.1L357 337.9L356 337.1L355 336.7L354 336.7L353 336.8L352 340.0L351 336.8L350 338.7L349 336.6L348 336.7L347 338.0L346 336.7L345 336.9L344 341.6L343 336.8L342 337.9L341 337.0L340 337.1L339 336.6L338 338.3L337 339.1L336 336.9L335 336.7L334 336.8L333 336.8L332 336.8L331 336.6L330 338.6L329 336.8L328 338.3L327 339.7L326 336.7L325 337.0L324 339.0L323 337.6L322 336.7L321 336.9L320 338.2L319 337.2L318 336.7L317 336.8L316 336.6L315 337.8L314 336.9L313 338.7L312 338.4L311 336.7L310 336.6L309 336.6L308 336.8L307 336.7L306 339.1L305 336.6L304 336.9L303 336.9L302 340.3L301 337.9L300 337.1L299 336.8L298 336.9L297 336.7L296 336.6L295 336.9L294 337.0L293 337.1L292 336.7L291 338.9L290 336.8L289 338.2L288 338.1L287 338.6L286 336.7L285 337.1L284 336.8L283 336.7L282 336.6L281 339.5L280 336.8L279 341.0L278 336.8L277 338.5L276 336.9L275 336.8L274 336.7L273 338.6L272 339.1L271 339.0L270 336.7L269 337.7L268 338.6L267 338.0L266 336.7L265 336.6L264 337.3L263 339.2L262 337.0L261 339.2L260 336.6L259 336.9L258 336.7L257 336.7L256 336.7L255 336.8L254 337.1L253 336.6L252 336.7L251 337.0L250 336.9L249 337.1L248 336.7L247 341.7L246 336.7L245 336.9L244 336.8L243 338.8L242 338.7L241 336.7L240 337.1L239 336.8L238 337.0L237 338.5L236 339.8L235 336.9L234 336.6L233 337.7L232 338.4L231 337.7L230 336.9L229 336.6L228 336.8L227 336.6L226 340.2L225 336.8L224 338.4L223 339.4Z" fill="#6b7484" stroke="#b4b8c0" stroke-width="1.6"/><path d="M223 334.1L224 334.6L225 336.1L226 332.6L227 336.4L228 336.3L229 336.4L230 336.0L231 334.7L232 334.6L233 334.9L234 336.3L235 336.2L236 333.9L237 334.8L238 336.0L239 336.1L240 336.0L241 336.2L242 334.2L243 334.5L244 336.2L245 336.1L246 336.2L247 332.7L248 336.2L249 336.0L250 336.0L251 336.0L252 336.3L253 336.4L254 336.0L255 336.2L256 336.4L257 336.3L258 336.2L259 336.1L260 336.4L261 334.4L262 336.1L263 334.1L264 335.2L265 336.3L266 336.2L267 334.5L268 334.3L269 334.6L270 336.2L271 334.0L272 334.4L273 333.6L274 336.3L275 336.2L276 336.1L277 334.4L278 336.3L279 333.3L280 336.3L281 334.0L282 336.3L283 336.4L284 336.2L285 336.0L286 336.2L287 334.3L288 335.1L289 334.6L290 336.0L291 334.8L292 336.3L293 336.1L294 336.0L295 336.0L296 336.3L297 336.3L298 336.1L299 336.3L300 336.0L301 334.5L302 333.5L303 336.1L304 336.1L305 336.3L306 334.0L307 336.2L308 336.1L309 336.3L310 336.4L311 336.2L312 334.9L313 334.0L314 336.0L315 334.6L316 336.4L317 336.3L318 336.3L319 336.0L320 334.9L321 336.2L322 336.3L323 334.9L324 333.9L325 336.1L326 336.3L327 334.1L328 334.8L329 336.2L330 333.3L331 336.4L332 336.3L333 336.0L334 336.1L335 336.3L336 336.1L337 334.5L338 334.0L339 336.4L340 336.1L341 336.1L342 334.6L343 336.1L344 332.4L345 336.2L346 336.2L347 335.2L348 336.2L349 336.3L350 334.1L351 336.1L352 333.0L353 336.2L354 336.3L355 336.3L356 336.0L357 334.4L358 334.5L359 334.2L360 334.3L361 336.1L362 336.0L363 336.2L364 334.9L365 336.4L366 336.2L367 334.3L368 336.1L369 334.0L370 334.2L371 336.1L372 336.0L373 336.2L374 335.0L375 336.3L376 336.3L377 334.2L378 334.6L379 336.1L380 334.8L381 334.4L382 336.1L383 336.2L384 336.1L385 336.3L386 336.3L387 336.0L388 336.3L389 336.3L390 336.2L391 336.2L392 336.1L393 336.1L394 335.2L395 336.0L396 336.0L397 336.2L398 336.3L399 336.2L400 333.1L401 336.0L402 336.0L403 336.1L404 336.1L405 336.1L406 336.1L407 336.1L408 334.3L409 336.3L410 336.2L411 336.1L412 336.1L413 336.0L414 336.1L415 334.9L416 335.1L417 336.2L418 336.3L419 336.1L420 336.3L421 334.2L422 334.9L423 336.1L424 336.1L425 336.1L426 334.4L427 336.2L428 336.1L429 336.3L430 336.2L431 334.3L432 335.1L433 336.3L434 332.9L435 335.2L436 336.0L437 336.1L438 336.3L439 336.2L440 334.1L441 336.3L442 334.4L443 336.4L444 336.3L445 336.0L446 336.1L447 336.4L448 336.4L449 334.6L450 336.4L451 336.4L452 335.1L453 336.1L454 336.1L455 336.0L456 335.1L457 336.2L458 336.2L459 336.2L460 336.2L461 336.1L462 336.3L463 334.0L464 336.4L465 336.2L466 336.4L467 336.3L468 336.0L469 336.3L470 335.2L471 336.3L472 336.1L473 334.6L474 336.3L475 336.0L476 334.4L477 336.1L478 336.2L479 336.3L480 336.2L481 336.2L482 336.1L483 334.7L484 336.2L485 334.0L486 335.1L487 336.0L488 336.1L489 336.1L490 336.2L491 336.1L492 336.0L493 336.2L494 336.3L495 336.2L496 334.7L497 333.5L498 335.1L499 336.2L500 334.1L501 334.1L502 336.1L503 334.0L504 336.0L505 336.2L506 336.1L507 336.3L508 336.1L509 336.2L510 336.2L511 336.2L512 334.3L513 334.8L514 336.0L515 336.2L516 336.1L517 336.1L518 334.5L519 336.0L520 336.0L521 336.2L522 336.0L523 336.0L524 336.2L525 336.1L526 334.6L527 336.2L528 334.9L529 336.3L530 334.5L531 336.2L532 336.1L533 336.1L534 333.9L535 333.3L536 336.2L537 336.3L538 336.2L539 336.0L540 334.5L541 336.3L542 334.6L543 336.1L544 334.7L545 334.5L546 334.1L547 336.0L548 336.2L549 336.3L550 336.2L551 336.3L552 332.4L553 336.0L554 336.2L555 336.3L556 336.2L556 336.7L555 336.7L554 336.8L553 336.9L552 341.2L551 336.7L550 336.8L549 336.7L548 336.9L547 336.9L546 338.2L545 339.1L544 338.6L543 337.0L542 338.9L541 336.6L540 338.4L539 337.2L538 336.8L537 336.7L536 336.8L535 339.6L534 338.5L533 336.8L532 336.9L531 336.8L530 338.8L529 336.8L528 338.6L527 336.7L526 337.8L525 336.9L524 336.9L523 337.1L522 337.0L521 336.7L520 337.1L519 336.9L518 338.6L517 336.8L516 337.1L515 336.8L514 337.0L513 338.7L512 337.8L511 336.7L510 336.7L509 336.9L508 336.9L507 336.7L506 337.0L505 336.9L504 336.9L503 339.2L502 337.0L501 338.0L500 339.2L499 336.7L498 337.7L497 339.6L496 338.7L495 336.9L494 336.6L493 336.9L492 337.0L491 337.0L490 337.0L489 336.8L488 337.1L487 337.1L486 338.4L485 338.6L484 336.8L483 338.0L482 336.8L481 336.7L480 336.7L479 336.7L478 336.9L477 337.0L476 338.6L475 337.0L474 336.7L473 338.0L472 337.1L471 336.7L470 337.7L469 336.7L468 336.8L467 336.7L466 336.6L465 336.8L464 336.6L463 339.7L462 336.8L461 337.0L460 336.8L459 336.7L458 336.7L457 336.8L456 338.4L455 337.1L454 336.8L453 337.0L452 337.4L451 336.6L450 336.6L449 338.9L448 336.6L447 336.6L446 336.8L445 336.9L444 336.7L443 336.7L442 339.3L441 336.7L440 338.8L439 336.7L438 336.6L437 336.8L436 337.0L435 338.1L434 341.3L433 336.6L432 337.8L431 339.1L430 336.8L429 336.6L428 336.8L427 336.9L426 338.0L425 337.0L424 336.8L423 336.8L422 338.7L421 339.5L420 336.7L419 336.9L418 336.7L417 336.8L416 338.3L415 338.6L414 336.9L413 337.1L412 336.7L411 336.9L410 336.7L409 336.7L408 339.4L407 336.8L406 337.0L405 337.0L404 336.8L403 337.0L402 337.1L401 337.0L400 339.7L399 336.8L398 336.7L397 336.8L396 337.0L395 337.1L394 337.6L393 336.8L392 337.0L391 336.7L390 336.7L389 336.7L388 336.7L387 337.1L386 336.7L385 336.7L384 336.9L383 336.8L382 337.0L381 338.2L380 338.2L379 336.9L378 337.7L377 337.9L376 336.6L375 336.7L374 338.4L373 336.7L372 336.9L371 336.9L370 339.4L369 339.9L368 337.0L367 337.9L366 336.8L365 336.7L364 338.2L363 336.8L362 337.1L361 337.0L360 339.3L359 339.5L358 339.1L357 337.9L356 337.1L355 336.7L354 336.7L353 336.8L352 340.0L351 336.8L350 338.7L349 336.6L348 336.7L347 338.0L346 336.7L345 336.9L344 341.6L343 336.8L342 337.9L341 337.0L340 337.1L339 336.6L338 338.3L337 339.1L336 336.9L335 336.7L334 336.8L333 336.8L332 336.8L331 336.6L330 338.6L329 336.8L328 338.3L327 339.7L326 336.7L325 337.0L324 339.0L323 337.6L322 336.7L321 336.9L320 338.2L319 337.2L318 336.7L317 336.8L316 336.6L315 337.8L314 336.9L313 338.7L312 338.4L311 336.7L310 336.6L309 336.6L308 336.8L307 336.7L306 339.1L305 336.6L304 336.9L303 336.9L302 340.3L301 337.9L300 337.1L299 336.8L298 336.9L297 336.7L296 336.6L295 336.9L294 337.0L293 337.1L292 336.7L291 338.9L290 336.8L289 338.2L288 338.1L287 338.6L286 336.7L285 337.1L284 336.8L283 336.7L282 336.6L281 339.5L280 336.8L279 341.0L278 336.8L277 338.5L276 336.9L275 336.8L274 336.7L273 338.6L272 339.1L271 339.0L270 336.7L269 337.7L268 338.6L267 338.0L266 336.7L265 336.6L264 337.3L263 339.2L262 337.0L261 339.2L260 336.6L259 336.9L258 336.7L257 336.7L256 336.7L255 336.8L254 337.1L253 336.6L252 336.7L251 337.0L250 336.9L249 337.1L248 336.7L247 341.7L246 336.7L245 336.9L244 336.8L243 338.8L242 338.7L241 336.7L240 337.1L239 336.8L238 337.0L237 338.5L236 339.8L235 336.9L234 336.6L233 337.7L232 338.4L231 337.7L230 336.9L229 336.6L228 336.8L227 336.6L226 340.2L225 336.8L224 338.4L223 339.4Z" fill="#6b7484" stroke="#141414" stroke-width=".600"/><path d="M223 359.5L224 357.4L225 359.7L226 359.6L227 359.7L228 359.5L229 359.8L230 356.3L231 359.5L232 359.8L233 358.4L234 359.6L235 359.5L236 359.6L237 359.5L238 357.5L239 359.7L240 359.7L241 359.5L242 359.6L243 359.7L244 357.6L245 359.8L246 357.3L247 359.7L248 359.7L249 359.5L250 357.5L251 359.8L252 356.0L253 357.4L254 359.5L255 357.4L256 359.9L257 357.7L258 359.9L259 356.6L260 358.3L261 359.9L262 358.5L263 359.6L264 358.6L265 359.6L266 359.5L267 359.8L268 358.5L269 359.8L270 359.7L271 359.8L272 359.9L273 358.5L274 358.5L275 359.5L276 359.8L277 357.8L278 359.6L279 359.7L280 356.3L281 359.8L282 358.3L283 359.7L284 359.8L285 359.6L286 359.6L287 359.7L288 357.5L289 359.5L290 357.2L291 356.0L292 357.4L293 356.3L294 359.8L295 358.2L296 359.8L297 357.8L298 359.6L299 358.4L300 359.6L301 359.9L302 359.6L303 359.7L304 357.9L305 359.5L306 359.7L307 359.8L308 359.5L309 359.8L310 359.8L311 356.8L312 359.6L313 358.3L314 359.7L315 357.8L316 359.8L317 359.8L318 359.6L319 359.5L320 358.0L321 359.5L322 359.7L323 359.5L324 359.5L325 359.6L326 359.8L327 359.6L328 359.9L329 359.5L330 359.9L331 359.6L332 359.8L333 359.8L334 359.8L335 357.7L336 357.8L337 357.2L338 356.2L339 359.6L340 359.7L341 359.9L342 359.8L343 359.7L344 359.5L345 358.1L346 358.6L347 359.7L348 359.7L349 357.7L350 359.5L351 359.7L352 359.6L353 359.8L354 359.7L355 359.6L356 358.0L357 357.3L358 359.7L359 358.5L360 358.0L361 359.5L362 359.5L363 358.3L364 359.7L365 359.8L366 359.7L367 359.5L368 359.6L369 359.6L370 359.6L371 357.7L372 359.7L373 359.7L374 359.8L375 358.6L376 359.5L377 359.7L378 357.4L379 357.7L380 357.3L381 358.3L382 359.8L383 358.3L384 358.1L385 356.7L386 359.5L387 359.5L388 359.6L389 359.7L390 359.7L391 359.6L392 359.5L393 359.7L394 356.8L395 357.3L396 359.8L397 359.9L398 359.8L399 359.8L400 359.9L401 357.9L402 357.9L403 357.3L404 359.6L405 357.9L406 358.4L407 356.6L408 359.5L409 359.7L410 358.5L411 359.8L412 358.0L413 359.5L414 359.7L415 359.5L416 359.6L417 356.1L418 357.8L419 359.6L420 359.9L421 359.5L422 356.6L423 359.6L424 359.5L425 359.8L426 359.6L427 359.6L428 359.6L429 359.8L430 357.3L431 357.8L432 359.5L433 359.6L434 359.7L435 359.8L436 359.8L437 359.7L438 359.5L439 359.6L440 359.7L441 359.7L442 359.8L443 358.2L444 359.7L445 359.9L446 358.4L447 359.8L448 359.6L449 359.5L450 357.2L451 357.6L452 359.6L453 358.3L454 359.8L455 359.7L456 359.7L457 358.3L458 359.8L459 359.9L460 359.7L461 359.7L462 359.6L463 358.6L464 358.4L465 359.6L466 359.8L467 357.7L468 358.2L469 359.5L470 359.5L471 357.5L472 359.6L473 359.7L474 356.4L475 356.0L476 359.5L477 359.6L478 359.5L479 356.1L480 359.6L481 359.9L482 359.5L483 359.8L484 356.6L485 356.4L486 357.7L487 359.7L488 359.8L489 359.7L490 359.7L491 359.5L492 359.8L493 358.1L494 359.5L495 359.8L496 359.7L497 357.5L498 359.6L499 357.4L500 359.6L501 357.6L502 359.7L503 359.6L504 359.6L505 359.5L506 359.5L507 359.6L508 359.5L509 359.6L510 359.5L511 357.7L512 359.7L513 359.7L514 359.7L515 359.5L516 359.7L517 359.8L518 359.6L519 357.4L520 357.8L521 359.7L522 356.9L523 359.9L524 359.5L525 359.6L526 357.7L527 357.4L528 359.7L529 359.6L530 359.5L531 357.5L532 357.8L533 359.6L534 358.0L535 359.8L536 359.5L537 359.5L538 357.6L539 357.5L540 358.0L541 355.7L542 359.7L543 359.8L544 359.7L545 356.7L546 357.5L547 359.8L548 359.8L549 357.8L550 358.5L551 359.8L552 359.6L553 359.5L554 359.9L555 357.5L556 359.5L556 360.7L555 362.5L554 360.1L553 360.3L552 360.5L551 360.1L550 361.3L549 362.2L548 360.2L547 360.2L546 362.6L545 363.2L544 360.4L543 360.2L542 360.2L541 363.6L540 362.5L539 361.9L538 361.4L537 360.3L536 360.7L535 360.2L534 361.9L533 360.4L532 361.8L531 363.0L530 360.4L529 360.3L528 360.3L527 362.7L526 361.7L525 360.4L524 360.7L523 360.1L522 363.1L521 360.2L520 362.1L519 362.2L518 360.5L517 360.2L516 360.2L515 360.6L514 360.3L513 360.4L512 360.5L511 362.6L510 360.4L509 360.5L508 360.5L507 360.4L506 360.4L505 360.6L504 360.4L503 360.3L502 360.4L501 362.1L500 360.4L499 363.6L498 360.2L497 363.3L496 360.2L495 360.2L494 360.6L493 361.2L492 360.2L491 360.7L490 360.3L489 360.4L488 360.2L487 360.3L486 361.5L485 363.6L484 362.6L483 360.2L482 360.5L481 360.1L480 360.3L479 365.4L478 360.3L477 360.4L476 360.3L475 365.6L474 364.5L473 360.5L472 360.5L471 362.2L470 360.6L469 360.5L468 362.1L467 362.2L466 360.2L465 360.4L464 361.4L463 361.4L462 360.5L461 360.4L460 360.2L459 360.2L458 360.2L457 361.8L456 360.3L455 360.4L454 360.2L453 361.1L452 360.4L451 363.1L450 363.7L449 360.4L448 360.4L447 360.2L446 361.7L445 360.1L444 360.3L443 362.1L442 360.2L441 360.2L440 360.2L439 360.5L438 360.4L437 360.2L436 360.2L435 360.2L434 360.3L433 360.5L432 360.4L431 362.0L430 362.1L429 360.2L428 360.4L427 360.3L426 360.3L425 360.2L424 360.7L423 360.3L422 362.3L421 360.5L420 360.2L419 360.5L418 362.5L417 362.9L416 360.5L415 360.4L414 360.3L413 360.6L412 361.9L411 360.2L410 361.9L409 360.5L408 360.6L407 363.1L406 361.2L405 361.5L404 360.5L403 363.4L402 361.4L401 362.2L400 360.2L399 360.2L398 360.1L397 360.1L396 360.1L395 363.1L394 364.5L393 360.3L392 360.7L391 360.4L390 360.3L389 360.3L388 360.4L387 360.4L386 360.3L385 364.2L384 362.3L383 361.9L382 360.2L381 361.4L380 361.8L379 361.7L378 362.3L377 360.3L376 360.7L375 361.3L374 360.3L373 360.3L372 360.2L371 362.6L370 360.6L369 360.6L368 360.6L367 360.7L366 360.4L365 360.3L364 360.3L363 361.3L362 360.4L361 360.5L360 361.7L359 361.5L358 360.3L357 361.9L356 361.6L355 360.3L354 360.4L353 360.2L352 360.4L351 360.3L350 360.3L349 362.3L348 360.4L347 360.3L346 361.5L345 361.9L344 360.3L343 360.3L342 360.2L341 360.1L340 360.2L339 360.4L338 364.8L337 361.8L336 362.1L335 362.1L334 360.3L333 360.3L332 360.2L331 360.5L330 360.2L329 360.6L328 360.1L327 360.6L326 360.2L325 360.5L324 360.5L323 360.6L322 360.3L321 360.4L320 361.3L319 360.5L318 360.4L317 360.3L316 360.2L315 362.9L314 360.3L313 362.0L312 360.3L311 364.2L310 360.2L309 360.1L308 360.5L307 360.2L306 360.2L305 360.6L304 362.1L303 360.4L302 360.4L301 360.2L300 360.5L299 361.0L298 360.4L297 362.0L296 360.2L295 361.6L294 360.2L293 363.4L292 362.9L291 362.8L290 362.5L289 360.6L288 362.3L287 360.3L286 360.2L285 360.4L284 360.3L283 360.3L282 361.3L281 360.2L280 362.5L279 360.2L278 360.3L277 362.4L276 360.2L275 360.7L274 361.7L273 360.9L272 360.1L271 360.3L270 360.2L269 360.2L268 361.5L267 360.2L266 360.6L265 360.6L264 361.4L263 360.3L262 361.3L261 360.2L260 361.9L259 364.3L258 360.2L257 361.6L256 360.1L255 362.5L254 360.4L253 361.8L252 363.3L251 360.2L250 363.0L249 360.6L248 360.2L247 360.4L246 363.2L245 360.3L244 361.7L243 360.3L242 360.5L241 360.7L240 360.4L239 360.3L238 362.9L237 360.7L236 360.5L235 360.5L234 360.3L233 361.6L232 360.1L231 360.5L230 363.2L229 360.2L228 360.5L227 360.3L226 360.3L225 360.3L224 363.1L223 360.3Z" fill="#6b7484" stroke="#b4b8c0" stroke-width="1.6"/><path d="M223 359.5L224 357.4L225 359.7L226 359.6L227 359.7L228 359.5L229 359.8L230 356.3L231 359.5L232 359.8L233 358.4L234 359.6L235 359.5L236 359.6L237 359.5L238 357.5L239 359.7L240 359.7L241 359.5L242 359.6L243 359.7L244 357.6L245 359.8L246 357.3L247 359.7L248 359.7L249 359.5L250 357.5L251 359.8L252 356.0L253 357.4L254 359.5L255 357.4L256 359.9L257 357.7L258 359.9L259 356.6L260 358.3L261 359.9L262 358.5L263 359.6L264 358.6L265 359.6L266 359.5L267 359.8L268 358.5L269 359.8L270 359.7L271 359.8L272 359.9L273 358.5L274 358.5L275 359.5L276 359.8L277 357.8L278 359.6L279 359.7L280 356.3L281 359.8L282 358.3L283 359.7L284 359.8L285 359.6L286 359.6L287 359.7L288 357.5L289 359.5L290 357.2L291 356.0L292 357.4L293 356.3L294 359.8L295 358.2L296 359.8L297 357.8L298 359.6L299 358.4L300 359.6L301 359.9L302 359.6L303 359.7L304 357.9L305 359.5L306 359.7L307 359.8L308 359.5L309 359.8L310 359.8L311 356.8L312 359.6L313 358.3L314 359.7L315 357.8L316 359.8L317 359.8L318 359.6L319 359.5L320 358.0L321 359.5L322 359.7L323 359.5L324 359.5L325 359.6L326 359.8L327 359.6L328 359.9L329 359.5L330 359.9L331 359.6L332 359.8L333 359.8L334 359.8L335 357.7L336 357.8L337 357.2L338 356.2L339 359.6L340 359.7L341 359.9L342 359.8L343 359.7L344 359.5L345 358.1L346 358.6L347 359.7L348 359.7L349 357.7L350 359.5L351 359.7L352 359.6L353 359.8L354 359.7L355 359.6L356 358.0L357 357.3L358 359.7L359 358.5L360 358.0L361 359.5L362 359.5L363 358.3L364 359.7L365 359.8L366 359.7L367 359.5L368 359.6L369 359.6L370 359.6L371 357.7L372 359.7L373 359.7L374 359.8L375 358.6L376 359.5L377 359.7L378 357.4L379 357.7L380 357.3L381 358.3L382 359.8L383 358.3L384 358.1L385 356.7L386 359.5L387 359.5L388 359.6L389 359.7L390 359.7L391 359.6L392 359.5L393 359.7L394 356.8L395 357.3L396 359.8L397 359.9L398 359.8L399 359.8L400 359.9L401 357.9L402 357.9L403 357.3L404 359.6L405 357.9L406 358.4L407 356.6L408 359.5L409 359.7L410 358.5L411 359.8L412 358.0L413 359.5L414 359.7L415 359.5L416 359.6L417 356.1L418 357.8L419 359.6L420 359.9L421 359.5L422 356.6L423 359.6L424 359.5L425 359.8L426 359.6L427 359.6L428 359.6L429 359.8L430 357.3L431 357.8L432 359.5L433 359.6L434 359.7L435 359.8L436 359.8L437 359.7L438 359.5L439 359.6L440 359.7L441 359.7L442 359.8L443 358.2L444 359.7L445 359.9L446 358.4L447 359.8L448 359.6L449 359.5L450 357.2L451 357.6L452 359.6L453 358.3L454 359.8L455 359.7L456 359.7L457 358.3L458 359.8L459 359.9L460 359.7L461 359.7L462 359.6L463 358.6L464 358.4L465 359.6L466 359.8L467 357.7L468 358.2L469 359.5L470 359.5L471 357.5L472 359.6L473 359.7L474 356.4L475 356.0L476 359.5L477 359.6L478 359.5L479 356.1L480 359.6L481 359.9L482 359.5L483 359.8L484 356.6L485 356.4L486 357.7L487 359.7L488 359.8L489 359.7L490 359.7L491 359.5L492 359.8L493 358.1L494 359.5L495 359.8L496 359.7L497 357.5L498 359.6L499 357.4L500 359.6L501 357.6L502 359.7L503 359.6L504 359.6L505 359.5L506 359.5L507 359.6L508 359.5L509 359.6L510 359.5L511 357.7L512 359.7L513 359.7L514 359.7L515 359.5L516 359.7L517 359.8L518 359.6L519 357.4L520 357.8L521 359.7L522 356.9L523 359.9L524 359.5L525 359.6L526 357.7L527 357.4L528 359.7L529 359.6L530 359.5L531 357.5L532 357.8L533 359.6L534 358.0L535 359.8L536 359.5L537 359.5L538 357.6L539 357.5L540 358.0L541 355.7L542 359.7L543 359.8L544 359.7L545 356.7L546 357.5L547 359.8L548 359.8L549 357.8L550 358.5L551 359.8L552 359.6L553 359.5L554 359.9L555 357.5L556 359.5L556 360.7L555 362.5L554 360.1L553 360.3L552 360.5L551 360.1L550 361.3L549 362.2L548 360.2L547 360.2L546 362.6L545 363.2L544 360.4L543 360.2L542 360.2L541 363.6L540 362.5L539 361.9L538 361.4L537 360.3L536 360.7L535 360.2L534 361.9L533 360.4L532 361.8L531 363.0L530 360.4L529 360.3L528 360.3L527 362.7L526 361.7L525 360.4L524 360.7L523 360.1L522 363.1L521 360.2L520 362.1L519 362.2L518 360.5L517 360.2L516 360.2L515 360.6L514 360.3L513 360.4L512 360.5L511 362.6L510 360.4L509 360.5L508 360.5L507 360.4L506 360.4L505 360.6L504 360.4L503 360.3L502 360.4L501 362.1L500 360.4L499 363.6L498 360.2L497 363.3L496 360.2L495 360.2L494 360.6L493 361.2L492 360.2L491 360.7L490 360.3L489 360.4L488 360.2L487 360.3L486 361.5L485 363.6L484 362.6L483 360.2L482 360.5L481 360.1L480 360.3L479 365.4L478 360.3L477 360.4L476 360.3L475 365.6L474 364.5L473 360.5L472 360.5L471 362.2L470 360.6L469 360.5L468 362.1L467 362.2L466 360.2L465 360.4L464 361.4L463 361.4L462 360.5L461 360.4L460 360.2L459 360.2L458 360.2L457 361.8L456 360.3L455 360.4L454 360.2L453 361.1L452 360.4L451 363.1L450 363.7L449 360.4L448 360.4L447 360.2L446 361.7L445 360.1L444 360.3L443 362.1L442 360.2L441 360.2L440 360.2L439 360.5L438 360.4L437 360.2L436 360.2L435 360.2L434 360.3L433 360.5L432 360.4L431 362.0L430 362.1L429 360.2L428 360.4L427 360.3L426 360.3L425 360.2L424 360.7L423 360.3L422 362.3L421 360.5L420 360.2L419 360.5L418 362.5L417 362.9L416 360.5L415 360.4L414 360.3L413 360.6L412 361.9L411 360.2L410 361.9L409 360.5L408 360.6L407 363.1L406 361.2L405 361.5L404 360.5L403 363.4L402 361.4L401 362.2L400 360.2L399 360.2L398 360.1L397 360.1L396 360.1L395 363.1L394 364.5L393 360.3L392 360.7L391 360.4L390 360.3L389 360.3L388 360.4L387 360.4L386 360.3L385 364.2L384 362.3L383 361.9L382 360.2L381 361.4L380 361.8L379 361.7L378 362.3L377 360.3L376 360.7L375 361.3L374 360.3L373 360.3L372 360.2L371 362.6L370 360.6L369 360.6L368 360.6L367 360.7L366 360.4L365 360.3L364 360.3L363 361.3L362 360.4L361 360.5L360 361.7L359 361.5L358 360.3L357 361.9L356 361.6L355 360.3L354 360.4L353 360.2L352 360.4L351 360.3L350 360.3L349 362.3L348 360.4L347 360.3L346 361.5L345 361.9L344 360.3L343 360.3L342 360.2L341 360.1L340 360.2L339 360.4L338 364.8L337 361.8L336 362.1L335 362.1L334 360.3L333 360.3L332 360.2L331 360.5L330 360.2L329 360.6L328 360.1L327 360.6L326 360.2L325 360.5L324 360.5L323 360.6L322 360.3L321 360.4L320 361.3L319 360.5L318 360.4L317 360.3L316 360.2L315 362.9L314 360.3L313 362.0L312 360.3L311 364.2L310 360.2L309 360.1L308 360.5L307 360.2L306 360.2L305 360.6L304 362.1L303 360.4L302 360.4L301 360.2L300 360.5L299 361.0L298 360.4L297 362.0L296 360.2L295 361.6L294 360.2L293 363.4L292 362.9L291 362.8L290 362.5L289 360.6L288 362.3L287 360.3L286 360.2L285 360.4L284 360.3L283 360.3L282 361.3L281 360.2L280 362.5L279 360.2L278 360.3L277 362.4L276 360.2L275 360.7L274 361.7L273 360.9L272 360.1L271 360.3L270 360.2L269 360.2L268 361.5L267 360.2L266 360.6L265 360.6L264 361.4L263 360.3L262 361.3L261 360.2L260 361.9L259 364.3L258 360.2L257 361.6L256 360.1L255 362.5L254 360.4L253 361.8L252 363.3L251 360.2L250 363.0L249 360.6L248 360.2L247 360.4L246 363.2L245 360.3L244 361.7L243 360.3L242 360.5L241 360.7L240 360.4L239 360.3L238 362.9L237 360.7L236 360.5L235 360.5L234 360.3L233 361.6L232 360.1L231 360.5L230 363.2L229 360.2L228 360.5L227 360.3L226 360.3L225 360.3L224 363.1L223 360.3Z" fill="#6b7484" stroke="#141414" stroke-width=".600"/><path d="M223 381.0L224 382.6L225 379.1L226 380.4L227 382.7L228 380.9L229 382.6L230 379.2L231 381.7L232 382.6L233 382.5L234 382.7L235 382.8L236 380.4L237 382.8L238 382.7L239 382.5L240 382.5L241 382.8L242 382.5L243 382.8L244 382.8L245 382.5L246 382.7L247 380.7L248 379.3L249 382.8L250 382.7L251 381.6L252 379.9L253 382.8L254 382.8L255 382.7L256 382.6L257 382.6L258 382.7L259 381.3L260 382.7L261 382.7L262 382.6L263 382.7L264 382.6L265 380.1L266 382.8L267 382.8L268 381.2L269 381.2L270 379.4L271 381.4L272 381.5L273 382.8L274 380.6L275 382.8L276 382.5L277 381.5L278 380.7L279 381.3L280 382.6L281 381.3L282 381.2L283 382.7L284 381.7L285 382.5L286 382.5L287 382.6L288 382.8L289 381.6L290 380.6L291 382.6L292 382.5L293 379.2L294 380.8L295 382.5L296 382.8L297 382.6L298 381.0L299 380.7L300 382.6L301 382.5L302 381.4L303 382.7L304 380.1L305 381.6L306 382.8L307 381.3L308 382.7L309 381.3L310 382.6L311 381.5L312 382.6L313 382.6L314 382.7L315 382.6L316 381.0L317 381.1L318 382.5L319 382.6L320 382.8L321 382.5L322 382.6L323 380.9L324 380.7L325 381.6L326 381.7L327 380.6L328 382.5L329 382.9L330 382.6L331 382.5L332 381.0L333 381.5L334 382.6L335 382.7L336 382.9L337 382.7L338 380.8L339 382.7L340 382.5L341 380.7L342 382.7L343 381.4L344 382.8L345 382.5L346 382.7L347 382.8L348 379.5L349 381.2L350 382.8L351 382.6L352 382.6L353 382.6L354 382.6L355 382.8L356 382.6L357 382.8L358 381.5L359 382.5L360 382.8L361 382.8L362 382.8L363 382.6L364 381.1L365 380.9L366 382.7L367 380.8L368 382.5L369 382.7L370 382.8L371 382.6L372 382.5L373 382.8L374 382.6L375 382.8L376 382.8L377 382.8L378 381.3L379 382.7L380 382.8L381 379.2L382 382.6L383 381.2L384 379.5L385 382.7L386 382.7L387 382.6L388 381.6L389 382.6L390 381.2L391 382.6L392 381.2L393 382.7L394 380.7L395 382.5L396 382.7L397 382.5L398 380.6L399 382.6L400 382.6L401 382.7L402 382.9L403 382.7L404 382.5L405 382.6L406 382.8L407 382.5L408 382.6L409 382.6L410 382.6L411 382.5L412 382.6L413 381.6L414 381.5L415 382.7L416 382.8L417 382.7L418 382.6L419 382.7L420 381.7L421 382.8L422 381.4L423 382.8L424 381.5L425 380.1L426 382.6L427 382.7L428 382.8L429 382.8L430 382.8L431 382.8L432 382.5L433 381.4L434 382.7L435 382.5L436 380.1L437 381.7L438 382.5L439 382.7L440 382.5L441 380.9L442 381.3L443 381.2L444 382.5L445 382.6L446 382.5L447 382.8L448 382.8L449 382.6L450 382.7L451 382.9L452 382.6L453 380.6L454 382.5L455 382.6L456 382.9L457 382.8L458 381.6L459 381.6L460 382.7L461 380.4L462 382.7L463 382.6L464 381.5L465 382.8L466 382.8L467 381.1L468 382.6L469 382.5L470 382.7L471 382.7L472 381.0L473 382.9L474 382.9L475 382.7L476 382.8L477 382.8L478 381.4L479 382.6L480 382.6L481 382.7L482 382.5L483 382.7L484 382.8L485 381.6L486 381.0L487 379.2L488 382.7L489 382.8L490 381.2L491 380.7L492 382.5L493 382.8L494 382.7L495 382.6L496 382.5L497 381.4L498 380.0L499 382.8L500 380.7L501 382.6L502 379.9L503 382.8L504 382.8L505 380.7L506 381.6L507 382.6L508 382.8L509 382.6L510 382.7L511 381.7L512 382.5L513 382.5L514 382.7L515 381.5L516 382.7L517 382.7L518 382.5L519 381.0L520 382.6L521 382.9L522 382.7L523 382.5L524 382.7L525 382.5L526 380.5L527 382.6L528 380.5L529 381.2L530 381.4L531 381.4L532 381.0L533 382.6L534 379.8L535 379.8L536 381.0L537 380.5L538 382.8L539 382.6L540 379.2L541 380.6L542 378.9L543 382.8L544 382.8L545 381.5L546 382.9L547 382.5L548 381.2L549 382.6L550 379.7L551 382.7L552 382.7L553 382.8L554 382.6L555 382.6L556 381.4L556 384.0L555 383.3L554 383.3L553 383.2L552 383.3L551 383.3L550 387.0L549 383.3L548 385.4L547 383.7L546 383.1L545 384.3L544 383.2L543 383.1L542 387.2L541 386.1L540 385.9L539 383.3L538 383.3L537 384.8L536 384.3L535 386.2L534 387.4L533 383.5L532 385.4L531 384.2L530 385.2L529 384.5L528 386.4L527 383.4L526 384.9L525 383.5L524 383.3L523 383.3L522 383.3L521 383.1L520 383.6L519 384.8L518 383.4L517 383.4L516 383.3L515 384.8L514 383.3L513 383.6L512 383.5L511 384.5L510 383.3L509 383.4L508 383.2L507 383.5L506 384.3L505 385.2L504 383.1L503 383.2L502 384.9L501 383.6L500 385.2L499 383.1L498 386.1L497 385.0L496 383.6L495 383.4L494 383.3L493 383.2L492 383.6L491 385.7L490 384.2L489 383.2L488 383.3L487 386.1L486 385.2L485 384.7L484 383.3L483 383.4L482 383.5L481 383.4L480 383.5L479 383.5L478 384.2L477 383.2L476 383.2L475 383.3L474 383.2L473 383.1L472 384.9L471 383.4L470 383.2L469 383.4L468 383.4L467 384.5L466 383.3L465 383.1L464 384.0L463 383.4L462 383.3L461 385.0L460 383.2L459 384.0L458 384.6L457 383.2L456 383.1L455 383.3L454 383.4L453 385.7L452 383.3L451 383.1L450 383.2L449 383.4L448 383.2L447 383.3L446 383.4L445 383.5L444 383.4L443 384.6L442 385.2L441 385.8L440 383.3L439 383.4L438 383.4L437 383.9L436 384.9L435 383.5L434 383.2L433 385.1L432 383.4L431 383.3L430 383.1L429 383.2L428 383.1L427 383.2L426 383.3L425 385.8L424 384.5L423 383.1L422 384.2L421 383.2L420 384.0L419 383.3L418 383.4L417 383.2L416 383.2L415 383.3L414 384.5L413 383.9L412 383.4L411 383.6L410 383.4L409 383.5L408 383.3L407 383.4L406 383.1L405 383.2L404 383.3L403 383.3L402 383.1L401 383.2L400 383.4L399 383.2L398 385.4L397 383.6L396 383.4L395 383.6L394 384.4L393 383.3L392 384.4L391 383.4L390 385.2L389 383.3L388 384.0L387 383.3L386 383.4L385 383.2L384 385.8L383 385.3L382 383.4L381 387.6L380 383.2L379 383.4L378 385.0L377 383.2L376 383.2L375 383.2L374 383.5L373 383.2L372 383.6L371 383.4L370 383.3L369 383.3L368 383.3L367 384.5L366 383.2L365 385.8L364 384.8L363 383.2L362 383.2L361 383.1L360 383.2L359 383.4L358 384.8L357 383.2L356 383.5L355 383.2L354 383.6L353 383.5L352 383.5L351 383.3L350 383.2L349 384.5L348 386.2L347 383.2L346 383.4L345 383.4L344 383.2L343 384.3L342 383.3L341 386.0L340 383.3L339 383.3L338 385.6L337 383.3L336 383.1L335 383.2L334 383.4L333 384.2L332 385.6L331 383.3L330 383.3L329 383.2L328 383.5L327 385.7L326 384.7L325 384.9L324 384.5L323 384.2L322 383.4L321 383.6L320 383.2L319 383.3L318 383.4L317 384.7L316 385.3L315 383.4L314 383.4L313 383.3L312 383.4L311 384.4L310 383.4L309 384.2L308 383.3L307 384.5L306 383.2L305 384.9L304 385.1L303 383.4L302 384.7L301 383.3L300 383.3L299 386.1L298 385.5L297 383.4L296 383.3L295 383.5L294 385.2L293 385.8L292 383.5L291 383.5L290 384.5L289 384.5L288 383.2L287 383.5L286 383.4L285 383.5L284 384.8L283 383.4L282 384.6L281 385.1L280 383.4L279 385.1L278 386.0L277 384.5L276 383.4L275 383.2L274 385.3L273 383.1L272 384.5L271 385.0L270 387.3L269 385.2L268 384.9L267 383.2L266 383.2L265 386.4L264 383.5L263 383.3L262 383.2L261 383.2L260 383.2L259 385.3L258 383.3L257 383.5L256 383.4L255 383.3L254 383.3L253 383.1L252 385.9L251 384.5L250 383.4L249 383.3L248 385.3L247 386.0L246 383.2L245 383.3L244 383.1L243 383.3L242 383.5L241 383.2L240 383.6L239 383.5L238 383.3L237 383.2L236 385.4L235 383.1L234 383.4L233 383.4L232 383.5L231 384.7L230 387.1L229 383.5L228 385.8L227 383.3L226 385.5L225 386.2L224 383.2L223 384.8Z" fill="#6b7484" stroke="#b4b8c0" stroke-width="1.6"/><path d="M223 381.0L224 382.6L225 379.1L226 380.4L227 382.7L228 380.9L229 382.6L230 379.2L231 381.7L232 382.6L233 382.5L234 382.7L235 382.8L236 380.4L237 382.8L238 382.7L239 382.5L240 382.5L241 382.8L242 382.5L243 382.8L244 382.8L245 382.5L246 382.7L247 380.7L248 379.3L249 382.8L250 382.7L251 381.6L252 379.9L253 382.8L254 382.8L255 382.7L256 382.6L257 382.6L258 382.7L259 381.3L260 382.7L261 382.7L262 382.6L263 382.7L264 382.6L265 380.1L266 382.8L267 382.8L268 381.2L269 381.2L270 379.4L271 381.4L272 381.5L273 382.8L274 380.6L275 382.8L276 382.5L277 381.5L278 380.7L279 381.3L280 382.6L281 381.3L282 381.2L283 382.7L284 381.7L285 382.5L286 382.5L287 382.6L288 382.8L289 381.6L290 380.6L291 382.6L292 382.5L293 379.2L294 380.8L295 382.5L296 382.8L297 382.6L298 381.0L299 380.7L300 382.6L301 382.5L302 381.4L303 382.7L304 380.1L305 381.6L306 382.8L307 381.3L308 382.7L309 381.3L310 382.6L311 381.5L312 382.6L313 382.6L314 382.7L315 382.6L316 381.0L317 381.1L318 382.5L319 382.6L320 382.8L321 382.5L322 382.6L323 380.9L324 380.7L325 381.6L326 381.7L327 380.6L328 382.5L329 382.9L330 382.6L331 382.5L332 381.0L333 381.5L334 382.6L335 382.7L336 382.9L337 382.7L338 380.8L339 382.7L340 382.5L341 380.7L342 382.7L343 381.4L344 382.8L345 382.5L346 382.7L347 382.8L348 379.5L349 381.2L350 382.8L351 382.6L352 382.6L353 382.6L354 382.6L355 382.8L356 382.6L357 382.8L358 381.5L359 382.5L360 382.8L361 382.8L362 382.8L363 382.6L364 381.1L365 380.9L366 382.7L367 380.8L368 382.5L369 382.7L370 382.8L371 382.6L372 382.5L373 382.8L374 382.6L375 382.8L376 382.8L377 382.8L378 381.3L379 382.7L380 382.8L381 379.2L382 382.6L383 381.2L384 379.5L385 382.7L386 382.7L387 382.6L388 381.6L389 382.6L390 381.2L391 382.6L392 381.2L393 382.7L394 380.7L395 382.5L396 382.7L397 382.5L398 380.6L399 382.6L400 382.6L401 382.7L402 382.9L403 382.7L404 382.5L405 382.6L406 382.8L407 382.5L408 382.6L409 382.6L410 382.6L411 382.5L412 382.6L413 381.6L414 381.5L415 382.7L416 382.8L417 382.7L418 382.6L419 382.7L420 381.7L421 382.8L422 381.4L423 382.8L424 381.5L425 380.1L426 382.6L427 382.7L428 382.8L429 382.8L430 382.8L431 382.8L432 382.5L433 381.4L434 382.7L435 382.5L436 380.1L437 381.7L438 382.5L439 382.7L440 382.5L441 380.9L442 381.3L443 381.2L444 382.5L445 382.6L446 382.5L447 382.8L448 382.8L449 382.6L450 382.7L451 382.9L452 382.6L453 380.6L454 382.5L455 382.6L456 382.9L457 382.8L458 381.6L459 381.6L460 382.7L461 380.4L462 382.7L463 382.6L464 381.5L465 382.8L466 382.8L467 381.1L468 382.6L469 382.5L470 382.7L471 382.7L472 381.0L473 382.9L474 382.9L475 382.7L476 382.8L477 382.8L478 381.4L479 382.6L480 382.6L481 382.7L482 382.5L483 382.7L484 382.8L485 381.6L486 381.0L487 379.2L488 382.7L489 382.8L490 381.2L491 380.7L492 382.5L493 382.8L494 382.7L495 382.6L496 382.5L497 381.4L498 380.0L499 382.8L500 380.7L501 382.6L502 379.9L503 382.8L504 382.8L505 380.7L506 381.6L507 382.6L508 382.8L509 382.6L510 382.7L511 381.7L512 382.5L513 382.5L514 382.7L515 381.5L516 382.7L517 382.7L518 382.5L519 381.0L520 382.6L521 382.9L522 382.7L523 382.5L524 382.7L525 382.5L526 380.5L527 382.6L528 380.5L529 381.2L530 381.4L531 381.4L532 381.0L533 382.6L534 379.8L535 379.8L536 381.0L537 380.5L538 382.8L539 382.6L540 379.2L541 380.6L542 378.9L543 382.8L544 382.8L545 381.5L546 382.9L547 382.5L548 381.2L549 382.6L550 379.7L551 382.7L552 382.7L553 382.8L554 382.6L555 382.6L556 381.4L556 384.0L555 383.3L554 383.3L553 383.2L552 383.3L551 383.3L550 387.0L549 383.3L548 385.4L547 383.7L546 383.1L545 384.3L544 383.2L543 383.1L542 387.2L541 386.1L540 385.9L539 383.3L538 383.3L537 384.8L536 384.3L535 386.2L534 387.4L533 383.5L532 385.4L531 384.2L530 385.2L529 384.5L528 386.4L527 383.4L526 384.9L525 383.5L524 383.3L523 383.3L522 383.3L521 383.1L520 383.6L519 384.8L518 383.4L517 383.4L516 383.3L515 384.8L514 383.3L513 383.6L512 383.5L511 384.5L510 383.3L509 383.4L508 383.2L507 383.5L506 384.3L505 385.2L504 383.1L503 383.2L502 384.9L501 383.6L500 385.2L499 383.1L498 386.1L497 385.0L496 383.6L495 383.4L494 383.3L493 383.2L492 383.6L491 385.7L490 384.2L489 383.2L488 383.3L487 386.1L486 385.2L485 384.7L484 383.3L483 383.4L482 383.5L481 383.4L480 383.5L479 383.5L478 384.2L477 383.2L476 383.2L475 383.3L474 383.2L473 383.1L472 384.9L471 383.4L470 383.2L469 383.4L468 383.4L467 384.5L466 383.3L465 383.1L464 384.0L463 383.4L462 383.3L461 385.0L460 383.2L459 384.0L458 384.6L457 383.2L456 383.1L455 383.3L454 383.4L453 385.7L452 383.3L451 383.1L450 383.2L449 383.4L448 383.2L447 383.3L446 383.4L445 383.5L444 383.4L443 384.6L442 385.2L441 385.8L440 383.3L439 383.4L438 383.4L437 383.9L436 384.9L435 383.5L434 383.2L433 385.1L432 383.4L431 383.3L430 383.1L429 383.2L428 383.1L427 383.2L426 383.3L425 385.8L424 384.5L423 383.1L422 384.2L421 383.2L420 384.0L419 383.3L418 383.4L417 383.2L416 383.2L415 383.3L414 384.5L413 383.9L412 383.4L411 383.6L410 383.4L409 383.5L408 383.3L407 383.4L406 383.1L405 383.2L404 383.3L403 383.3L402 383.1L401 383.2L400 383.4L399 383.2L398 385.4L397 383.6L396 383.4L395 383.6L394 384.4L393 383.3L392 384.4L391 383.4L390 385.2L389 383.3L388 384.0L387 383.3L386 383.4L385 383.2L384 385.8L383 385.3L382 383.4L381 387.6L380 383.2L379 383.4L378 385.0L377 383.2L376 383.2L375 383.2L374 383.5L373 383.2L372 383.6L371 383.4L370 383.3L369 383.3L368 383.3L367 384.5L366 383.2L365 385.8L364 384.8L363 383.2L362 383.2L361 383.1L360 383.2L359 383.4L358 384.8L357 383.2L356 383.5L355 383.2L354 383.6L353 383.5L352 383.5L351 383.3L350 383.2L349 384.5L348 386.2L347 383.2L346 383.4L345 383.4L344 383.2L343 384.3L342 383.3L341 386.0L340 383.3L339 383.3L338 385.6L337 383.3L336 383.1L335 383.2L334 383.4L333 384.2L332 385.6L331 383.3L330 383.3L329 383.2L328 383.5L327 385.7L326 384.7L325 384.9L324 384.5L323 384.2L322 383.4L321 383.6L320 383.2L319 383.3L318 383.4L317 384.7L316 385.3L315 383.4L314 383.4L313 383.3L312 383.4L311 384.4L310 383.4L309 384.2L308 383.3L307 384.5L306 383.2L305 384.9L304 385.1L303 383.4L302 384.7L301 383.3L300 383.3L299 386.1L298 385.5L297 383.4L296 383.3L295 383.5L294 385.2L293 385.8L292 383.5L291 383.5L290 384.5L289 384.5L288 383.2L287 383.5L286 383.4L285 383.5L284 384.8L283 383.4L282 384.6L281 385.1L280 383.4L279 385.1L278 386.0L277 384.5L276 383.4L275 383.2L274 385.3L273 383.1L272 384.5L271 385.0L270 387.3L269 385.2L268 384.9L267 383.2L266 383.2L265 386.4L264 383.5L263 383.3L262 383.2L261 383.2L260 383.2L259 385.3L258 383.3L257 383.5L256 383.4L255 383.3L254 383.3L253 383.1L252 385.9L251 384.5L250 383.4L249 383.3L248 385.3L247 386.0L246 383.2L245 383.3L244 383.1L243 383.3L242 383.5L241 383.2L240 383.6L239 383.5L238 383.3L237 383.2L236 385.4L235 383.1L234 383.4L233 383.4L232 383.5L231 384.7L230 387.1L229 383.5L228 385.8L227 383.3L226 385.5L225 386.2L224 383.2L223 384.8Z" fill="#6b7484" stroke="#141414" stroke-width=".600"/><rect x="271" y="355" width="1" height="4.5" fill="#f00"/><rect x="283" y="355" width="1" height="4.5" fill="#f00"/><rect x="365" y="355" width="1" height="4.5" fill="#f00"/><rect x="426" y="355" width="1" height="4.5" fill="#f00"/><rect x="435" y="355" width="1" height="4.5" fill="#f00"/><rect x="446" y="355" width="1" height="4.5" fill="#f00"/><rect x="459" y="355" width="1" height="4.5" fill="#f00"/><rect x="529" y="355" width="1" height="4.5" fill="#f00"/><rect x="540" y="355" width="1" height="4.5" fill="#f00"/><rect x="244" y="378.5" width="1" height="4.5" fill="#f00"/><rect x="250" y="378.5" width="1" height="4.5" fill="#f00"/><rect x="282" y="378.5" width="1" height="4.5" fill="#f00"/><rect x="296" y="378.5" width="1" height="4.5" fill="#f00"/><rect x="299" y="378.5" width="1" height="4.5" fill="#f00"/><rect x="411" y="378.5" width="1" height="4.5" fill="#f00"/><rect x="433" y="378.5" width="1" height="4.5" fill="#f00"/><rect x="436" y="378.5" width="1" height="4.5" fill="#f00"/><rect x="446" y="378.5" width="1" height="4.5" fill="#f00"/><rect x="449" y="378.5" width="1" height="4.5" fill="#f00"/><rect x="452" y="378.5" width="1" height="4.5" fill="#f00"/><rect x="467" y="378.5" width="1" height="4.5" fill="#f00"/><rect x="494" y="378.5" width="1" height="4.5" fill="#f00"/><rect x="516" y="378.5" width="1" height="4.5" fill="#f00"/><rect x="530" y="378.5" width="1" height="4.5" fill="#f00"/></svg><div style="left:225px;top:190px;width:1.5px;height:230px;background:#e8283c;"></div>
<svg style="left:219px;top:188px" width="16" height="10" viewBox="0 0 16 10"><path d="M2 1h12l-6 8z" fill="#f00"/></svg><svg style="left:219px;top:408px" width="16" height="12" viewBox="0 0 16 12"><path d="M2 12h12l-6.5-11z" fill="#f00"/></svg><div class="ab" style="left:22px;top:420px;width:124px;height:30px;"></div>
<div style="left:28px;top:420px;height:30px;line-height:30px;color:#c4c4cc;font-size:14.5px;">Links</div>
<div style="left:124px;top:424px;width:1px;height:22px;background:#5a5a66;"></div>
<svg style="left:130.0px;top:427.0px" width="10" height="16" viewBox="0 0 10 16"><path d="M1 6.5L5 1.5L9 6.5zM1 9.5L5 14.5L9 9.5z" fill="#c4c4cc"/></svg><div class="ab" style="left:148px;top:420px;width:23px;height:30px;"><svg style="left:5px;top:7px" width="14" height="16" viewBox="0 0 14 16"><circle cx="5.5" cy="5.5" r="3.8" fill="#fff" stroke="#111" stroke-width="1.2"/><path d="M8.3 8.5l4 4.5" stroke="#111" stroke-width="2.6"/><path d="M8.3 8.5l4 4.5" stroke="#ccc" stroke-width="1"/><path d="M3.5 5.5h4" stroke="#111" stroke-width="1.2"/></svg></div>
<div class="ab" style="left:173px;top:420px;width:23px;height:30px;"><svg style="left:5px;top:7px" width="14" height="16" viewBox="0 0 14 16"><circle cx="5.5" cy="5.5" r="3.8" fill="#fff" stroke="#111" stroke-width="1.2"/><path d="M8.3 8.5l4 4.5" stroke="#111" stroke-width="2.6"/><path d="M8.3 8.5l4 4.5" stroke="#ccc" stroke-width="1"/><path d="M3.5 5.5h4M5.5 3.5v4" stroke="#111" stroke-width="1.2"/></svg></div>
<div class="ab" style="left:198px;top:420px;width:23px;height:30px;"><svg style="left:5px;top:7px" width="14" height="16" viewBox="0 0 14 16"><circle cx="5.5" cy="5.5" r="3.8" fill="#fff" stroke="#111" stroke-width="1.2"/><path d="M8.3 8.5l4 4.5" stroke="#111" stroke-width="2.6"/><path d="M8.3 8.5l4 4.5" stroke="#ccc" stroke-width="1"/><path d="M3 5.5h5M5.5 3v5" stroke="#111" stroke-width="1"/></svg></div>
<div style="left:223px;top:421.5px;width:540px;height:28px;background:linear-gradient(#c8c8c8 0,#a8a8a8 2px,#a2a2a2 50%,#969696 100%);border-bottom:1px solid #3a3a3a;"></div>
<div style="left:693px;top:432px;width:1px;height:5px;background:#d8d8d8;"></div>
<div style="left:696px;top:432px;width:1px;height:5px;background:#d8d8d8;"></div>
<div style="left:699px;top:432px;width:1px;height:5px;background:#d8d8d8;"></div>
<div style="left:223px;top:421px;width:14px;height:29px;background:#2a2a36;"><svg style="left:2px;top:8px" width="10" height="13" viewBox="0 0 10 13"><path d="M8 1L2.5 6.5 8 12" fill="none" stroke="#f4f4f4" stroke-width="2"/></svg></div>
<div style="left:1180px;top:176px;width:88px;height:18px;background:#000;"></div>
<div style="left:1202px;top:177px;height:17px;line-height:17px;color:#1e8fe6;font-weight:bold;font-size:13px;overflow:hidden;width:66px;letter-spacing:-.1px;">loten-nan</div>
<div style="left:1268px;top:175px;width:24px;height:17px;background:#646472;border-radius:2px;"><svg style="left:4px;top:3px" width="16" height="11" viewBox="0 0 16 11"><path d="M1.5 9L8 2.5 14.5 9" fill="none" stroke="#d2d2d2" stroke-width="2.3"/></svg></div>
<div style="left:1010px;top:194px;width:389px;height:120px;background:#5c524f;border-radius:7px 7px 0 0;border:1px solid #2e2826;"></div>
<div style="left:1010px;top:194px;width:389px;height:24px;background:#5c524f;border-radius:7px 7px 0 0;border-top:1px solid #2e2826;box-sizing:border-box;"></div>
<div style="left:1018px;top:196px;height:21px;line-height:21px;color:#a29492;font-weight:bold;font-size:12px;">Virtual Keyboard ver.1.9 [130:0]</div>
<div style="left:1320.25px;top:200.25px;width:11.5px;height:11.5px;border:2px solid #8d807e;border-radius:50%;"></div>
<div style="left:1346.25px;top:200.25px;width:11.5px;height:11.5px;border:2px solid #8d807e;border-radius:50%;"></div>
<div style="left:1372.25px;top:200.25px;width:11.5px;height:11.5px;border:2px solid #8d807e;border-radius:50%;"></div>
<div style="left:1014px;top:218px;width:382px;height:96px;background:#d9d9d9;"></div>
<div style="left:1014px;top:218px;width:382px;height:1px;background:#fff;"></div>
<div style="left:1014px;top:218px;width:1px;height:34px;background:#fff;"></div>
<div style="left:1014px;top:250px;width:382px;height:2px;background:#a0a0a0;"></div>
<div class="vk" style="left:1025px;top:219px;height:30px;line-height:30px;"><u>F</u>ile</div>
<div class="vk" style="left:1061px;top:219px;height:30px;line-height:30px;"><u>V</u>iew</div>
<div class="vk" style="left:1106px;top:219px;height:30px;line-height:30px;"><u>R</u>everb</div>
<div class="vk" style="left:1164px;top:219px;height:30px;line-height:30px;"><u>C</u>horus</div>
<div style="left:1014px;top:253px;width:382px;height:61px;background:#000;"></div>
<svg style="left:1016px;top:255px" width="379" height="56" viewBox="0 0 379 56"><rect x="0" y="0" width="379" height="56" fill="#fff"/><rect x="16" y="0" width="1" height="56" fill="#000"/><rect x="34" y="0" width="1" height="56" fill="#000"/><rect x="52" y="0" width="1" height="56" fill="#000"/><rect x="70" y="0" width="1" height="56" fill="#000"/><rect x="88" y="0" width="1" height="56" fill="#000"/><rect x="106" y="0" width="1" height="56" fill="#000"/><rect x="124" y="0" width="1" height="56" fill="#000"/><rect x="142" y="0" width="1" height="56" fill="#000"/><rect x="160" y="0" width="1" height="56" fill="#000"/><rect x="178" y="0" width="1" height="56" fill="#000"/><rect x="196" y="0" width="1" height="56" fill="#000"/><rect x="214" y="0" width="1" height="56" fill="#000"/><rect x="232" y="0" width="1" height="56" fill="#000"/><rect x="250" y="0" width="1" height="56" fill="#000"/><rect x="268" y="0" width="1" height="56" fill="#000"/><rect x="286" y="0" width="1" height="56" fill="#000"/><rect x="304" y="0" width="1" height="56" fill="#000"/><rect x="322" y="0" width="1" height="56" fill="#000"/><rect x="340" y="0" width="1" height="56" fill="#000"/><rect x="358" y="0" width="1" height="56" fill="#000"/><rect x="376" y="0" width="1" height="56" fill="#000"/><rect x="394" y="0" width="1" height="56" fill="#000"/><rect x="9.0" y="0" width="12" height="40.5" fill="#000"/><rect x="27.0" y="0" width="12" height="40.5" fill="#000"/><rect x="63.0" y="0" width="12" height="40.5" fill="#000"/><rect x="81.0" y="0" width="12" height="40.5" fill="#000"/><rect x="99.0" y="0" width="12" height="40.5" fill="#000"/><rect x="135.0" y="0" width="12" height="40.5" fill="#000"/><rect x="153.0" y="0" width="12" height="40.5" fill="#000"/><rect x="189.0" y="0" width="12" height="40.5" fill="#000"/><rect x="207.0" y="0" width="12" height="40.5" fill="#000"/><rect x="225.0" y="0" width="12" height="40.5" fill="#000"/><rect x="261.0" y="0" width="12" height="40.5" fill="#000"/><rect x="279.0" y="0" width="12" height="40.5" fill="#000"/><rect x="315.0" y="0" width="12" height="40.5" fill="#000"/><rect x="333.0" y="0" width="12" height="40.5" fill="#000"/><rect x="351.0" y="0" width="12" height="40.5" fill="#000"/><rect x="387.0" y="0" width="12" height="40.5" fill="#000"/></svg><div style="left:762px;top:308px;width:641px;height:260px;background:#5c524f;border-radius:7px 7px 0 0;border:1px solid #2e2826;"></div>
<div style="left:762px;top:308px;width:641px;height:24px;background:#5c524f;border-radius:7px 7px 0 0;border-top:1px solid #2e2826;box-sizing:border-box;"></div>
<div style="left:1320.25px;top:314.25px;width:11.5px;height:11.5px;border:2px solid #8d807e;border-radius:50%;"></div>
<div style="left:1346.25px;top:314.25px;width:11.5px;height:11.5px;border:2px solid #8d807e;border-radius:50%;"></div>
<div style="left:1372.25px;top:314.25px;width:11.5px;height:11.5px;border:2px solid #8d807e;border-radius:50%;"></div>
<div style="left:771px;top:310px;height:21px;line-height:21px;color:#a29492;font-weight:bold;font-size:12px;">Steckfeld - JACK Audio Connection Kit</div>
<div style="left:762px;top:332px;width:635px;height:236px;background:#7b6b69;"></div>
<div style="left:1397px;top:332px;width:1px;height:236px;background:#6a5d5b;"></div>
<div style="left:1398px;top:332px;width:2px;height:236px;background:#2e2826;"></div>
<div class="qb" style="left:775px;top:342px;width:83px;height:24px;"></div>
<svg style="left:796px;top:346px" width="14" height="17" viewBox="0 0 14 17"><path d="M1 1h8l4 4v11h-12z" fill="#fff" stroke="#333" stroke-width="1"/><path d="M9 1v4h4" fill="#ddd" stroke="#333" stroke-width=".8"/></svg><div style="left:813px;top:342px;height:24px;line-height:24px;color:#e2dad8;font-size:12px;"><u>N</u>eu</div>
<div class="qb" style="left:864px;top:342px;width:85px;height:24px;"></div>
<svg style="left:872px;top:346px" width="17" height="16" viewBox="0 0 17 16"><path d="M2 3h5l1.5 2h6.5v9h-13z" fill="#f6f29a" stroke="#4a4a20" stroke-width="1"/><path d="M1 14l2.5-7h12.5l-2 7z" fill="#e8e000" stroke="#4a4a20" stroke-width="1"/></svg><div style="left:891px;top:342px;height:24px;line-height:24px;color:#e2dad8;font-size:12px;"><u>L</u>aden...</div>
<div class="qd" style="left:955px;top:342px;width:109px;height:24px;"></div>
<svg style="left:964px;top:346px" width="15" height="15" viewBox="0 0 15 15"><rect x=".5" y=".5" width="14" height="14" fill="#9a8c8a" stroke="#65595a"/><rect x="3" y="1" width="9" height="6" fill="#c8bcba"/><rect x="4" y="9" width="7" height="5" fill="#6f6361"/></svg><div style="left:982px;top:342px;height:24px;line-height:24px;color:#a89a98;font-size:12px;"><u>S</u>peichern...</div>
<div class="qb" style="left:1070px;top:342px;width:215px;height:24px;"></div>
<svg style="left:1076px;top:347px" width="15" height="14" viewBox="0 0 15 14"><path d="M2 1.5v11M13 1.5v11M2 2l11 10M2 12l11-10" fill="none" stroke="#1c54e0" stroke-width="1.8"/></svg><div style="left:1095px;top:342px;height:24px;line-height:24px;color:#eee6e4;font-weight:bold;font-size:12px;letter-spacing:.25px;">Unbenannt0</div>
<svg style="left:1269px;top:350px" width="10" height="9" viewBox="0 0 10 9"><path d="M1 1h8L5 8z" fill="#a09290" stroke="#d0c6c4" stroke-width=".8"/></svg><div class="qd" style="left:1291px;top:342px;width:96px;height:24px;"></div>
<svg style="left:1300px;top:346px" width="12" height="15" viewBox="0 0 12 15"><path d="M4 1h6l-3 5h4l-8 8 2-6h-3z" fill="#b8aaa8" stroke="#6a5e5c" stroke-width=".6"/></svg><div style="left:1318px;top:342px;height:24px;line-height:24px;color:#a89a98;font-size:12px;">A<u>k</u>tivieren</div>
<div style="left:770px;top:376px;width:622px;height:1px;background:#5e5350;"></div>
<div style="left:770px;top:377px;width:622px;height:1px;background:#8b7b78;"></div>
<div class="qb" style="left:775px;top:388px;width:116px;height:24px;"></div>
<svg style="left:784px;top:393px" width="14" height="14" viewBox="0 0 14 14"><path d="M5 1h4v4h4v4h-4v4h-4v-4h-4v-4h4z" fill="#1ec01e" stroke="#0a6a0a" stroke-width="1"/></svg><div style="left:802px;top:388px;height:24px;line-height:24px;color:#e2dad8;font-size:12px;">Hinzufügen...</div>
<div class="qd" style="left:775px;top:418px;width:116px;height:24px;"></div>
<svg style="left:786px;top:423px" width="14" height="14" viewBox="0 0 14 14"><path d="M9 1l3 2-6.5 9-3.5 1.5.5-3.5z" fill="#e8dedc" stroke="#6a5e5c" stroke-width=".7"/></svg><div style="left:804px;top:419px;height:24px;line-height:24px;color:#a89a98;font-size:12px;">Bearbeiten...</div>
<div class="qb" style="left:1271px;top:388px;width:116px;height:24px;"></div>
<svg style="left:1280px;top:393px" width="14" height="14" viewBox="0 0 14 14"><path d="M5 1h4v4h4v4h-4v4h-4v-4h-4v-4h4z" fill="#1ec01e" stroke="#0a6a0a" stroke-width="1"/></svg><div style="left:1298px;top:388px;height:24px;line-height:24px;color:#e2dad8;font-size:12px;">Hinzufügen...</div>
<div class="qd" style="left:1271px;top:418px;width:116px;height:24px;"></div>
<svg style="left:1282px;top:423px" width="14" height="14" viewBox="0 0 14 14"><path d="M9 1l3 2-6.5 9-3.5 1.5.5-3.5z" fill="#e8dedc" stroke="#6a5e5c" stroke-width=".7"/></svg><div style="left:1299px;top:419px;height:24px;line-height:24px;color:#a89a98;font-size:12px;">Bearbeiten...</div>
<div class="qd" style="left:1271px;top:449.5px;width:116px;height:24.5px;"></div>
<svg style="left:1287px;top:453px" width="15" height="16" viewBox="0 0 15 16"><rect x="1" y="1" width="8" height="10" fill="#e8e0de" stroke="#5a4e4c" stroke-width=".8"/><rect x="6" y="5" width="8" height="10" fill="#f4eeec" stroke="#5a4e4c" stroke-width=".8"/><path d="M8 8h4M8 10h4M8 12h4" stroke="#5a4e4c" stroke-width=".8"/></svg><div style="left:1305px;top:450px;height:24px;line-height:24px;color:#a89a98;font-size:12px;">Kopieren...</div>
<div class="qd" style="left:1271px;top:480.5px;width:116px;height:24.5px;"></div>
<svg style="left:1290px;top:485px" width="13" height="13" viewBox="0 0 13 13"><path d="M2 2l9 10M11 2l-9 10" stroke="#92847f" stroke-width="1.8"/></svg><div style="left:1308px;top:481px;height:24px;line-height:24px;color:#a89a98;font-size:12px;">Entfernen</div>
<div style="left:897px;top:386px;width:154px;height:182px;background:#fff;border:1px solid #4e4442;"></div>
<div style="left:898px;top:387px;width:152px;height:23px;background:linear-gradient(#85746f 0%,#806f6c 48%,#766663 52%,#7a6a67 100%);border-bottom:1px solid #4e4442;"></div>
<div style="left:1047px;top:391px;width:1px;height:15px;background:#5e5350;"></div>
<div style="left:902px;top:388px;height:22px;line-height:22px;color:#e6dedc;font-size:12px;">Ausgangsanschlüsse</div>
<div style="left:1112px;top:386px;width:154px;height:182px;background:#fff;border:1px solid #4e4442;"></div>
<div style="left:1113px;top:387px;width:152px;height:23px;background:linear-gradient(#85746f 0%,#806f6c 48%,#766663 52%,#7a6a67 100%);border-bottom:1px solid #4e4442;"></div>
<div style="left:1262px;top:391px;width:1px;height:15px;background:#5e5350;"></div>
<div style="left:1117px;top:388px;height:22px;line-height:22px;color:#e6dedc;font-size:12px;">Eingangsanschlüsse</div>
<div style="left:0px;top:456px;width:591px;height:150px;background:#7b6b69;border-radius:7px 0 0 0;border:1px solid #2e2826;"></div>
<div style="left:0px;top:456px;width:409px;height:24px;background:#5c524f;border-radius:7px 0 0 0;border-top:1px solid #1a1614;"></div>
<div style="left:9px;top:457px;height:22px;line-height:22px;color:#a29492;font-weight:bold;font-size:12px;">Pd</div>
<div style="left:409px;top:451px;width:182px;height:29px;background:#7b6b69;"></div>
<div style="left:0px;top:480px;width:6px;height:126px;background:#5c524f;"></div>
<div style="left:6px;top:480px;width:580px;height:124px;background:#d9d9d9;"></div>
<div style="left:6px;top:480px;width:580px;height:1px;background:#fff;"></div>
<div style="left:13px;top:481.5px;height:28px;line-height:28px;color:#000;font-size:12px;">File</div>
<div style="left:46px;top:481.5px;height:28px;line-height:28px;color:#000;font-size:12px;">Find</div>
<div style="left:85px;top:481.5px;height:28px;line-height:28px;color:#000;font-size:12px;">Windows</div>
<div style="left:152px;top:481.5px;height:28px;line-height:28px;color:#000;font-size:12px;">Media</div>
<div style="left:552px;top:481.5px;height:28px;line-height:28px;color:#000;font-size:12px;">Help</div>
<div style="left:6px;top:509px;width:580px;height:1px;background:#828282;"></div>
<div style="left:31px;top:514px;height:16px;line-height:16px;color:#000;width:40px;text-align:center;">IN</div>
<div style="left:98px;top:514px;height:16px;line-height:16px;color:#000;width:40px;text-align:center;">OUT</div>
<div style="left:38px;top:536px;width:28px;height:19px;background:#fff;border:1px solid;border-color:#828282 #fff #fff #828282;"></div>
<div style="left:41px;top:538px;height:17px;line-height:17px;color:#000;">0</div>
<div style="left:104px;top:536px;width:28px;height:19px;background:#fff;border:1px solid;border-color:#828282 #fff #fff #828282;"></div>
<div style="left:107px;top:538px;height:17px;line-height:17px;color:#000;">0</div>
<div style="left:27px;top:562px;width:51px;height:26px;background:#d9d9d9;border:1px solid;border-color:#fff #828282 #828282 #fff;"></div>
<div style="left:27px;top:563px;height:26px;line-height:26px;color:#a3a3a3;width:51px;text-align:center;">CLIP</div>
<div style="left:93px;top:562px;width:51px;height:26px;background:#d9d9d9;border:1px solid;border-color:#fff #828282 #828282 #fff;"></div>
<div style="left:93px;top:563px;height:26px;line-height:26px;color:#a3a3a3;width:51px;text-align:center;">CLIP</div>
<div style="left:173px;top:533px;width:11px;height:11px;background:#fff;border:1px solid;border-color:#828282 #fff #fff #828282;"><svg style="left:0;top:0" width="9" height="9" viewBox="0 0 9 9"><path d="M1.5 4l2 2.5 4-5" fill="none" stroke="#000" stroke-width="1.7"/></svg></div>
<div style="left:188px;top:531px;height:18px;line-height:18px;color:#000;font-size:12.3px;">compute audio</div>
<div style="left:173px;top:554px;width:11px;height:11px;background:#fff;border:1px solid;border-color:#828282 #fff #fff #828282;"></div>
<div style="left:188px;top:552px;height:18px;line-height:18px;color:#000;font-size:12.3px;">peak meters</div>
<div style="left:304px;top:530px;width:60px;height:41px;background:#c3c3c3;border:1px solid;border-color:#fff #828282 #828282 #fff;"></div>
<div style="left:304px;top:536px;height:15px;line-height:15px;color:#000;width:60px;text-align:center;">DIO</div>
<div style="left:304px;top:551px;height:15px;line-height:15px;color:#000;width:60px;text-align:center;">errors</div>
<div style="left:505px;top:530px;width:74px;height:41px;background:#d9d9d9;border:1px solid;border-color:#fff #828282 #828282 #fff;"></div>
<div style="left:505px;top:536px;height:15px;line-height:15px;color:#000;width:74px;text-align:center;">clear</div>
<div style="left:505px;top:551px;height:15px;line-height:15px;color:#000;width:74px;text-align:center;">printout</div>
<div style="left:8px;top:593px;width:578px;height:11px;background:#fff;overflow:hidden;"><div style="left:2px;top:2px;height:14px;line-height:14px;font-family:'DejaVu Sans Mono','Liberation Mono',monospace;font-weight:bold;font-size:11.6px;color:#000;white-space:pre;">audio I/O stuck... closing audio</div></div>
<div style="left:0px;top:603px;width:553px;height:423px;background:#7b6b69;border:1px solid #2e2826;"></div>
<div style="left:0px;top:603px;width:409px;height:24px;background:#5c524f;border-top:1px solid #1a1614;"></div>
<div style="left:8px;top:604px;height:22px;line-height:22px;color:#a29492;font-weight:bold;font-size:12px;white-space:pre;">player2.pd  - /home/me</div>
<div style="left:409px;top:603px;width:144px;height:24px;background:#7b6b69;"></div>
<div style="left:0px;top:627px;width:6px;height:399px;background:#5c524f;"></div>
<div style="left:6px;top:627px;width:546px;height:30px;background:#d9d9d9;"></div>
<div style="left:6px;top:627px;width:546px;height:1px;background:#fff;"></div>
<div style="left:12px;top:628px;height:28px;line-height:28px;color:#000;font-size:12px;">File</div>
<div style="left:45px;top:628px;height:28px;line-height:28px;color:#000;font-size:12px;">Edit</div>
<div style="left:82px;top:628px;height:28px;line-height:28px;color:#000;font-size:12px;">Put</div>
<div style="left:115px;top:628px;height:28px;line-height:28px;color:#000;font-size:12px;">Find</div>
<div style="left:154px;top:628px;height:28px;line-height:28px;color:#000;font-size:12px;">Windows</div>
<div style="left:220px;top:628px;height:28px;line-height:28px;color:#000;font-size:12px;">Media</div>
<div style="left:6px;top:656px;width:546px;height:2px;background:#828282;"></div>
<div style="left:4px;top:658px;width:548px;height:368px;background:#fff;border-left:1px solid #000;"></div>
<svg style="left:0;top:658px" width="552" height="368" viewBox="0 658 552 368"><path d="M295 675L474 684" stroke="#000" stroke-width="1.25" fill="none"/><path d="M474 684L125 730" stroke="#000" stroke-width="1.25" fill="none"/><path d="M474 684L213 730" stroke="#000" stroke-width="1.25" fill="none"/><path d="M474 684L330 724" stroke="#000" stroke-width="1.25" fill="none"/><path d="M474 684L408 724" stroke="#000" stroke-width="1.25" fill="none"/><path d="M474 684L552 686" stroke="#000" stroke-width="1.25" fill="none"/><path d="M474 684L552 689" stroke="#000" stroke-width="1.25" fill="none"/><path d="M474 684L552 694" stroke="#000" stroke-width="1.25" fill="none"/><path d="M474 684L552 709" stroke="#000" stroke-width="1.25" fill="none"/><path d="M126 745L124 759" stroke="#000" stroke-width="1.25" fill="none"/><path d="M124 774L153 775" stroke="#000" stroke-width="1.25" fill="none"/><path d="M124 774L145 813" stroke="#000" stroke-width="1.25" fill="none"/><path d="M214 745L219 775" stroke="#000" stroke-width="1.25" fill="none"/><path d="M154 790L172 849" stroke="#000" stroke-width="1.25" fill="none"/><path d="M219 790L172 849" stroke="#000" stroke-width="1.25" fill="none"/><path d="M146 829L172 849" stroke="#000" stroke-width="1.25" fill="none"/><path d="M172 864L176 894" stroke="#000" stroke-width="2.5" fill="none"/><path d="M214 864L177 894" stroke="#000" stroke-width="1.25" fill="none"/><path d="M294 886L198 894" stroke="#000" stroke-width="1.25" fill="none"/><path d="M296.5 886L296.5 907" stroke="#000" stroke-width="1.25" fill="none"/><path d="M176 909L488 1026" stroke="#000" stroke-width="2.5" fill="none"/><path d="M176 909L504 1026" stroke="#000" stroke-width="2.5" fill="none"/><path d="M331 739L333 749" stroke="#000" stroke-width="1.25" fill="none"/><path d="M348 763L367 761" stroke="#000" stroke-width="1.25" fill="none"/><path d="M333 764L333 785" stroke="#000" stroke-width="1.25" fill="none"/><path d="M409 739L451 784" stroke="#000" stroke-width="1.25" fill="none"/><path d="M368 776L400 821" stroke="#000" stroke-width="1.25" fill="none"/><path d="M451 799L400 821" stroke="#000" stroke-width="1.25" fill="none"/><path d="M333 800L400 821" stroke="#000" stroke-width="1.25" fill="none"/><path d="M400 836L407 868" stroke="#000" stroke-width="2.5" fill="none"/><path d="M442 836L408 868" stroke="#000" stroke-width="1.25" fill="none"/><path d="M502 881L429 868" stroke="#000" stroke-width="1.25" fill="none"/><path d="M505 882L505 897" stroke="#000" stroke-width="1.25" fill="none"/><path d="M407 883L486 1026" stroke="#000" stroke-width="2.5" fill="none"/><path d="M407 883L504 1026" stroke="#000" stroke-width="2.5" fill="none"/><path d="M552 979L505 1026" stroke="#000" stroke-width="2.5" fill="none"/><path d="M552 997L520 1026" stroke="#000" stroke-width="2.0" fill="none"/><path d="M552 1012L529 1026" stroke="#000" stroke-width="2.0" fill="none"/><path d="M552 1021L541 1026" stroke="#000" stroke-width="2.0" fill="none"/><rect x="293.5" y="752.5" width="15" height="134" fill="#fbfbfb" stroke="#000"/><rect x="293" y="882" width="16" height="3" fill="#000"/><rect x="293" y="751" width="6" height="1.5" fill="#000"/><rect x="293" y="886" width="6" height="1.5" fill="#000"/><rect x="501.5" y="749.5" width="15" height="134" fill="#fbfbfb" stroke="#000"/><rect x="501" y="879" width="16" height="3" fill="#000"/><rect x="501" y="748" width="6" height="1.5" fill="#000"/><rect x="501" y="883" width="6" height="1.5" fill="#000"/><rect x="123.5" y="759.5" width="15" height="15" fill="none" stroke="#000"/><circle cx="131" cy="767" r="6.5" fill="none" stroke="#000"/><rect x="332.5" y="749.5" width="15" height="15" fill="none" stroke="#000"/><circle cx="340" cy="757" r="6.5" fill="none" stroke="#000"/><path d="M153.5 775.5h38l-4 4v7l4 4h-38z" fill="none" stroke="#000"/><path d="M218.5 775.5h32l-4 4v7l4 4h-32z" fill="none" stroke="#000"/><path d="M367.5 761.5h38l-4 4v7l4 4h-38z" fill="none" stroke="#000"/><path d="M450.5 784.5h32l-4 4v7l4 4h-32z" fill="none" stroke="#000"/><path d="M145.5 813.5h105l-4 4v7l4 4h-105z" fill="none" stroke="#000"/><path d="M332.5 785.5h92l-4 4v7l4 4h-92z" fill="none" stroke="#000"/><path d="M262.5 674.5h29l4 4v9h-33z" fill="none" stroke="#000"/><path d="M293.5 907.5h29l4 4v9h-33z" fill="none" stroke="#000"/><path d="M501.5 897.5h29l4 4v9h-33z" fill="none" stroke="#000"/><rect x="472.5" y="667.5" width="23" height="15" fill="none" stroke="#000"/><rect x="472" y="667" width="7" height="1.5" fill="#000"/><rect x="472" y="682" width="7" height="1.5" fill="#000"/><rect x="125.5" y="730.5" width="64" height="15" fill="none" stroke="#000"/><rect x="125" y="730" width="7" height="1.5" fill="#000"/><rect x="125" y="745" width="7" height="1.5" fill="#000"/><rect x="213.5" y="730.5" width="64" height="15" fill="none" stroke="#000"/><rect x="213" y="730" width="7" height="1.5" fill="#000"/><rect x="213" y="745" width="7" height="1.5" fill="#000"/><rect x="330.5" y="724.5" width="58" height="15" fill="none" stroke="#000"/><rect x="330" y="724" width="7" height="1.5" fill="#000"/><rect x="330" y="739" width="7" height="1.5" fill="#000"/><rect x="408.5" y="724.5" width="65" height="15" fill="none" stroke="#000"/><rect x="408" y="724" width="7" height="1.5" fill="#000"/><rect x="408" y="739" width="7" height="1.5" fill="#000"/><rect x="171.5" y="849.5" width="47" height="15" fill="none" stroke="#000"/><rect x="171" y="849" width="7" height="1.5" fill="#000"/><rect x="171" y="864" width="7" height="1.5" fill="#000"/><rect x="399.5" y="821.5" width="46" height="15" fill="none" stroke="#000"/><rect x="399" y="821" width="7" height="1.5" fill="#000"/><rect x="399" y="836" width="7" height="1.5" fill="#000"/><rect x="175.5" y="894.5" width="23" height="15" fill="none" stroke="#000"/><rect x="175" y="894" width="7" height="1.5" fill="#000"/><rect x="175" y="909" width="7" height="1.5" fill="#000"/><rect x="406.5" y="868.5" width="23" height="15" fill="none" stroke="#000"/><rect x="406" y="868" width="7" height="1.5" fill="#000"/><rect x="406" y="883" width="7" height="1.5" fill="#000"/><text x="264" y="685" font-family="Liberation Mono, DejaVu Sans Mono, monospace" font-weight="bold" font-size="10" fill="#000" xml:space="preserve">113</text><text x="475" y="679" font-family="Liberation Mono, DejaVu Sans Mono, monospace" font-weight="bold" font-size="10" fill="#000" xml:space="preserve">key</text><text x="127" y="741" font-family="Liberation Mono, DejaVu Sans Mono, monospace" font-weight="bold" font-size="10" fill="#000" xml:space="preserve">select 113</text><text x="215" y="741" font-family="Liberation Mono, DejaVu Sans Mono, monospace" font-weight="bold" font-size="10" fill="#000" xml:space="preserve">select 119</text><text x="332" y="735" font-family="Liberation Mono, DejaVu Sans Mono, monospace" font-weight="bold" font-size="10" fill="#000" xml:space="preserve">select 97</text><text x="410" y="735" font-family="Liberation Mono, DejaVu Sans Mono, monospace" font-weight="bold" font-size="10" fill="#000" xml:space="preserve">select 115</text><text x="155" y="786" font-family="Liberation Mono, DejaVu Sans Mono, monospace" font-weight="bold" font-size="10" fill="#000" xml:space="preserve">start</text><text x="220" y="786" font-family="Liberation Mono, DejaVu Sans Mono, monospace" font-weight="bold" font-size="10" fill="#000" xml:space="preserve">stop</text><text x="369" y="772" font-family="Liberation Mono, DejaVu Sans Mono, monospace" font-weight="bold" font-size="10" fill="#000" xml:space="preserve">start</text><text x="452" y="795" font-family="Liberation Mono, DejaVu Sans Mono, monospace" font-weight="bold" font-size="10" fill="#000" xml:space="preserve">stop</text><text x="147" y="824" font-family="Liberation Mono, DejaVu Sans Mono, monospace" font-weight="bold" font-size="10" fill="#000" xml:space="preserve">open traffic.wav</text><text x="334" y="796" font-family="Liberation Mono, DejaVu Sans Mono, monospace" font-weight="bold" font-size="10" fill="#000" xml:space="preserve">open loten.wav</text><text x="173" y="860" font-family="Liberation Mono, DejaVu Sans Mono, monospace" font-weight="bold" font-size="10" fill="#000" xml:space="preserve">readsf~</text><text x="401" y="832" font-family="Liberation Mono, DejaVu Sans Mono, monospace" font-weight="bold" font-size="10" fill="#000" xml:space="preserve">readsf~</text><text x="177" y="905" font-family="Liberation Mono, DejaVu Sans Mono, monospace" font-weight="bold" font-size="10" fill="#000" xml:space="preserve">*~</text><text x="408" y="879" font-family="Liberation Mono, DejaVu Sans Mono, monospace" font-weight="bold" font-size="10" fill="#000" xml:space="preserve">*~</text><text x="108" y="809" font-family="Liberation Mono, DejaVu Sans Mono, monospace" font-weight="bold" font-size="10" fill="#000" xml:space="preserve">q w</text><text x="468" y="823" font-family="Liberation Mono, DejaVu Sans Mono, monospace" font-weight="bold" font-size="10" fill="#000" xml:space="preserve">a s</text><text x="295" y="918" font-family="Liberation Serif, DejaVu Serif, serif" font-weight="bold" font-size="11" fill="#000">0</text><text x="503" y="908" font-family="Liberation Serif, DejaVu Serif, serif" font-weight="bold" font-size="11" fill="#000">0</text></svg><div style="left:552px;top:565px;width:850px;height:462px;background:#5c524f;border-radius:7px 0 0 0;"></div>
<div style="left:990px;top:565px;width:410px;height:1px;background:#2e2826;"></div>
<div style="left:552px;top:565px;width:438px;height:24px;background:#7b6b69;border-radius:7px 0 0 0;"></div>
<div style="left:551.5px;top:589px;width:3.5px;height:437px;background:#7b6b69;"></div>
<div style="left:555px;top:612px;width:845px;height:414px;background:#191919;"></div>
<div style="left:557px;top:624px;width:45px;height:27px;background:#7b6b69;"></div>
<div style="left:605px;top:624px;width:45px;height:27px;background:#7b6b69;"></div>
<div style="left:586px;top:654px;width:64px;height:16px;background:#7b6b69;"></div>
<div style="left:557px;top:673px;width:20px;height:15px;background:#7b6b69;"></div>
<div style="left:582px;top:673px;width:20px;height:15px;background:#7b6b69;"></div>
<div style="left:605px;top:673px;width:45px;height:15px;background:#7b6b69;"></div>
<div class="mb" style="left:557px;top:680px;width:20px;height:19px;border-top:none;"><svg style="left:2px;top:3px" width="12" height="10" viewBox="0 0 12 10"><path d="M9 -1L3 4l6 5" fill="none" stroke="#444" stroke-width="1.5"/></svg></div>
<div class="mb" style="left:582px;top:680px;width:20px;height:19px;border-top:none;"><svg style="left:2px;top:3px" width="12" height="10" viewBox="0 0 12 10"><path d="M3 -1l6 5-6 5" fill="none" stroke="#444" stroke-width="1.5"/></svg></div>
<div class="mb" style="left:605px;top:676px;width:45px;height:23px;border-top:none;overflow:hidden;"><div style="left:0;top:2px;width:41px;height:16px;line-height:16px;font-size:14px;color:#444;text-align:center;">REV</div></div>
<div style="left:557px;top:673px;width:20px;height:15px;background:#7b6b69;"></div>
<div style="left:582px;top:673px;width:20px;height:15px;background:#7b6b69;"></div>
<div style="left:605px;top:673px;width:45px;height:15px;background:#7b6b69;"></div>
<div class="mb" style="left:605px;top:704px;width:45px;height:27px;"><div style="left:0;top:1px;width:41px;height:23px;line-height:23px;text-align:center;font-size:14px;color:#444;">IN</div></div>
<div class="mb" style="left:605px;top:732px;width:45px;height:27px;"><div style="left:0;top:1px;width:41px;height:23px;line-height:23px;text-align:center;font-size:14px;color:#444;">OUT</div></div>
<div class="mb" style="left:605px;top:760px;width:45px;height:27px;"><div style="left:0;top:2.0px;width:41px;height:10px;line-height:10px;text-align:center;font-size:7.5px;color:#444;">RELOOP</div><div style="left:0;top:12.0px;width:41px;height:10px;line-height:10px;text-align:center;font-size:7.5px;color:#444;">EXIT</div></div>
<div style="left:652px;top:688px;width:2px;height:338px;background:#454545;"></div>
<div style="left:573px;top:721px;width:2px;height:160px;background:#454545;"></div>
<div style="left:559px;top:794px;width:31px;height:14px;background:#191919;border:2px solid #454545;"><div style="left:1px;top:3.5px;width:25px;height:2.5px;background:#2a96e8;"></div></div>
<div class="mx" style="left:595px;top:794px;height:16px;line-height:16px;color:#e0e0e0;font-size:12px;">+0.00</div>
<div class="mb" style="left:592px;top:842px;width:27px;height:19px;"><svg style="left:5px;top:4px" width="13" height="8" viewBox="0 0 13 8"><path d="M1 7l5.5-5.5L12 7" fill="none" stroke="#444" stroke-width="1.4"/></svg></div>
<div class="mb" style="left:592px;top:865px;width:27px;height:19px;"><svg style="left:5px;top:4px" width="13" height="8" viewBox="0 0 13 8"><path d="M1 1l5.5 5.5L12 1" fill="none" stroke="#444" stroke-width="1.4"/></svg></div>
<div class="mb" style="left:623px;top:842px;width:27px;height:19px;"><svg style="left:5px;top:4px" width="13" height="8" viewBox="0 0 13 8"><path d="M1 7l5.5-5.5L12 7" fill="none" stroke="#444" stroke-width="1.4"/></svg></div>
<div class="mb" style="left:623px;top:865px;width:27px;height:19px;"><svg style="left:5px;top:4px" width="13" height="8" viewBox="0 0 13 8"><path d="M1 1l5.5 5.5L12 1" fill="none" stroke="#444" stroke-width="1.4"/></svg></div>
<div class="mx" style="left:560px;top:889px;height:10px;line-height:10px;width:30px;text-align:center;font-size:7.5px;color:#6a6a6a;">RATE</div>
<div class="mx" style="left:589px;top:889px;height:10px;line-height:10px;width:30px;text-align:center;font-size:7.5px;color:#6a6a6a;">PERM</div>
<div class="mx" style="left:620px;top:889px;height:10px;line-height:10px;width:30px;text-align:center;font-size:7.5px;color:#6a6a6a;">TEMP</div>
<div class="mb" style="left:557px;top:907px;width:45px;height:27px;"><div style="left:0;top:2.0px;width:41px;height:10px;line-height:10px;text-align:center;font-size:7.5px;color:#444;">HEAD</div><div style="left:0;top:12.0px;width:41px;height:10px;line-height:10px;text-align:center;font-size:7.5px;color:#444;">PHONE</div></div>
<div class="mb" style="left:605px;top:907px;width:45px;height:27px;"><div style="left:0;top:1px;width:41px;height:23px;line-height:23px;text-align:center;font-size:11px;color:#444;">SYNC</div></div>
<div class="mb" style="left:605px;top:939px;width:45px;height:26px;"><div style="left:0;top:1px;width:41px;height:22px;line-height:22px;text-align:center;font-size:8px;color:#444;">FLANGER</div></div>
<div style="left:573px;top:981px;width:2px;height:45px;background:#454545;"></div>
<div style="left:559px;top:968px;width:31px;height:13px;background:#191919;border:2px solid #454545;"><div style="left:1px;top:3px;width:25px;height:2.5px;background:#2a96e8;"></div></div>
<div style="left:634px;top:965px;width:17px;height:11px;border:2px solid #454545;"></div>
<div style="left:634px;top:977px;width:17px;height:52px;border:2px solid #454545;"></div>
<svg style="left:596px;top:985px" width="32" height="32" viewBox="-16 -16 32 32"><circle cx="0" cy="0" r="13" fill="none" stroke="#454545" stroke-width="2"/><path d="M0 -2.5V-14" stroke="#2a96e8" stroke-width="2.8" transform="rotate(2)"/></svg><div class="mx" style="left:582.0px;top:1017px;height:10px;line-height:10px;width:60px;text-align:center;font-size:7.5px;color:#6a6a6a;letter-spacing:-.2px;">GAIN</div>
<div style="left:656px;top:624px;width:744px;height:64px;background:linear-gradient(#1a1a1a 0%,#2b2b2b 45%,#2b2b2b 55%,#1a1a1a 100%);"></div>
<div style="left:656px;top:688px;width:744px;height:63px;background:linear-gradient(#1a1a1a 0%,#2b2b2b 45%,#2b2b2b 55%,#1a1a1a 100%);"></div>
<div style="left:656px;top:658px;width:744px;height:1px;background:#00c800;"></div>
<div style="left:656px;top:721px;width:744px;height:1px;background:#00c800;"></div>
<div style="left:1056px;top:629px;width:1px;height:59px;background:#0000c8;"></div>
<div style="left:1056px;top:692px;width:1px;height:59px;background:#d80000;"></div>
<div class="mx" style="left:657px;top:753px;height:15px;line-height:15px;color:#e6e6e6;font-size:12px;white-space:pre;word-spacing:1px;">BPM:  0.00</div>
<div class="mx" style="left:813px;top:753px;height:15px;line-height:15px;color:#e6e6e6;font-size:12px;">00:00, Dur: 00:00</div>
<div class="mx" style="left:1204px;top:753px;height:15px;line-height:15px;color:#e6e6e6;font-size:12px;white-space:pre;word-spacing:1px;">BPM:  0.00</div>
<div class="mx" style="left:1360px;top:753px;height:15px;line-height:15px;color:#e6e6e6;font-size:12px;">00:00, Dur: 00:00</div>
<div style="left:657px;top:767px;width:251px;height:20px;background:#202020;"></div>
<div style="left:657px;top:768px;width:2px;height:19px;background:#0000e0;"></div>
<div style="left:1204px;top:767px;width:196px;height:20px;background:#202020;"></div>
<div style="left:1204px;top:768px;width:2px;height:19px;background:#e00000;"></div>
<div class="mx" style="left:911px;top:761px;height:7px;line-height:7px;font-size:7.5px;color:#2a96e8;width:24px;text-align:center;">STOP</div>
<div class="mx" style="left:911px;top:767px;height:7px;line-height:7px;font-size:7.5px;color:#4a4a4a;width:24px;text-align:center;">NEXT</div>
<div class="mx" style="left:911px;top:773px;height:7px;line-height:7px;font-size:7.5px;color:#4a4a4a;width:24px;text-align:center;">LOOP</div>
<div class="mx" style="left:911px;top:779px;height:7px;line-height:7px;font-size:7.5px;color:#4a4a4a;width:24px;text-align:center;">PING</div>
<div class="mx" style="left:1177px;top:761px;height:7px;line-height:7px;font-size:7.5px;color:#e81010;width:24px;text-align:center;">STOP</div>
<div class="mx" style="left:1177px;top:767px;height:7px;line-height:7px;font-size:7.5px;color:#4a4a4a;width:24px;text-align:center;">NEXT</div>
<div class="mx" style="left:1177px;top:773px;height:7px;line-height:7px;font-size:7.5px;color:#4a4a4a;width:24px;text-align:center;">LOOP</div>
<div class="mx" style="left:1177px;top:779px;height:7px;line-height:7px;font-size:7.5px;color:#4a4a4a;width:24px;text-align:center;">PING</div>
<div style="left:654px;top:789.5px;width:746px;height:2px;background:#454545;"></div>
<svg style="left:656px;top:791.5px" width="32" height="32" viewBox="-16 -16 32 32"><circle cx="0" cy="0" r="13" fill="none" stroke="#454545" stroke-width="2"/><path d="M0 -2.5V-14" stroke="#3fd83f" stroke-width="2.8" transform="rotate(0)"/></svg><div class="mx" style="left:642.0px;top:822.5px;height:10px;line-height:10px;width:60px;text-align:center;font-size:7.5px;color:#6a6a6a;letter-spacing:-.2px;">DEPTH</div>
<svg style="left:693px;top:791.5px" width="32" height="32" viewBox="-16 -16 32 32"><circle cx="0" cy="0" r="13" fill="none" stroke="#454545" stroke-width="2"/><path d="M0 -2.5V-14" stroke="#3fd83f" stroke-width="2.8" transform="rotate(0)"/></svg><div class="mx" style="left:679.0px;top:822.5px;height:10px;line-height:10px;width:60px;text-align:center;font-size:7.5px;color:#6a6a6a;letter-spacing:-.2px;">DELAY</div>
<svg style="left:730px;top:791.5px" width="32" height="32" viewBox="-16 -16 32 32"><circle cx="0" cy="0" r="13" fill="none" stroke="#454545" stroke-width="2"/><path d="M0 -2.5V-14" stroke="#3fd83f" stroke-width="2.8" transform="rotate(0)"/></svg><div class="mx" style="left:716.0px;top:822.5px;height:10px;line-height:10px;width:60px;text-align:center;font-size:7.5px;color:#6a6a6a;letter-spacing:-.2px;">LFO</div>
<svg style="left:805px;top:791.5px" width="32" height="32" viewBox="-16 -16 32 32"><circle cx="0" cy="0" r="13" fill="none" stroke="#454545" stroke-width="2"/><path d="M0 -2.5V-14" stroke="#3fd83f" stroke-width="2.8" transform="rotate(205)"/></svg><div class="mx" style="left:791.0px;top:822.5px;height:10px;line-height:10px;width:60px;text-align:center;font-size:7.5px;color:#6a6a6a;letter-spacing:-.2px;">PRE/MAIN</div>
<svg style="left:843px;top:791.5px" width="32" height="32" viewBox="-16 -16 32 32"><circle cx="0" cy="0" r="13" fill="none" stroke="#454545" stroke-width="2"/><path d="M0 -2.5V-14" stroke="#3fd83f" stroke-width="2.8" transform="rotate(0)"/></svg><div class="mx" style="left:829.0px;top:822.5px;height:10px;line-height:10px;width:60px;text-align:center;font-size:7.5px;color:#6a6a6a;letter-spacing:-.2px;">HEAD VOL</div>
<div style="left:975px;top:811px;width:161px;height:2px;background:#454545;"></div>
<div style="left:1049px;top:797px;width:13px;height:30px;background:#191919;border:2px solid #454545;"><div style="left:3px;top:1px;width:2.5px;height:24px;background:#3fd83f;"></div></div>
<svg style="left:1199px;top:791.5px" width="32" height="32" viewBox="-16 -16 32 32"><circle cx="0" cy="0" r="13" fill="none" stroke="#454545" stroke-width="2"/><path d="M0 -2.5V-14" stroke="#3fd83f" stroke-width="2.8" transform="rotate(0)"/></svg><div class="mx" style="left:1185.0px;top:822.5px;height:10px;line-height:10px;width:60px;text-align:center;font-size:7.5px;color:#6a6a6a;letter-spacing:-.2px;">BALANCE</div>
<svg style="left:1237px;top:791.5px" width="32" height="32" viewBox="-16 -16 32 32"><circle cx="0" cy="0" r="13" fill="none" stroke="#454545" stroke-width="2"/><path d="M0 -2.5V-14" stroke="#3fd83f" stroke-width="2.8" transform="rotate(0)"/></svg><div class="mx" style="left:1223.0px;top:822.5px;height:10px;line-height:10px;width:60px;text-align:center;font-size:7.5px;color:#6a6a6a;letter-spacing:-.2px;">VOLUME</div>
<div style="left:1272px;top:795px;width:11px;height:34.5px;border:2px solid #454545;"></div>
<div style="left:1284.5px;top:795px;width:120px;height:16px;border:2px solid #454545;"></div>
<div style="left:1284.5px;top:813.5px;width:120px;height:16px;border:2px solid #454545;"></div>
<div style="left:654px;top:832px;width:746px;height:2px;background:#454545;"></div>
<div style="left:786px;top:837px;width:1px;height:189px;background:#3c3c3c;"></div>
<div style="left:658px;top:838.5px;width:120px;height:21px;background:#191919;border:1.5px solid #f0f0f0;"></div>
<div style="left:662px;top:839px;height:21px;line-height:21px;color:#e0e0e0;font-size:12px;">Search...</div>
<div style="left:656.5px;top:867px;width:123px;height:159px;background:#191919;border:1px solid #3a3a3a;border-bottom:none;"></div>
<div style="left:657px;top:868px;width:122px;height:18px;background:#0c84d8;"></div>
<svg style="left:664px;top:871px" width="11" height="12" viewBox="0 0 11 12"><path d="M1.5 1.5v9l8-4.5z" fill="#0a2a4a" stroke="#000" stroke-width="1"/></svg><div style="left:702px;top:869px;height:18px;line-height:18px;color:#e6e6e6;font-size:12px;">Library</div>
<div style="left:702px;top:887px;height:18px;line-height:18px;color:#e6e6e6;font-size:12px;">Auto DJ</div>
<div style="left:702px;top:905px;height:18px;line-height:18px;color:#e6e6e6;font-size:12px;">Playlists</div>
<div style="left:702px;top:923px;height:18px;line-height:18px;color:#e6e6e6;font-size:12px;">Crates</div>
<div style="left:702px;top:941px;height:18px;line-height:18px;color:#e6e6e6;font-size:12px;">Browse</div>
<div style="left:702px;top:959px;height:18px;line-height:18px;color:#e6e6e6;font-size:12px;">Analyze</div>
<svg style="left:678px;top:868px" width="18" height="110" viewBox="0 0 18 110">
<g fill="#e8a070"><path d="M2 5.5L9 2l7 3.5v1.5h-14z"/><rect x="3.5" y="8" width="2" height="6"/><rect x="6.8" y="8" width="2" height="6"/><rect x="10" y="8" width="2" height="6"/><rect x="13" y="8" width="2" height="6"/><rect x="2" y="14.5" width="14" height="1.8"/></g>
<g fill="#f87010"><path d="M4.5 25a4.5 4.5 0 0 1 9 0z"/><rect x="4.5" y="26" width="9" height="7" rx="1"/><rect x="2" y="26" width="1.8" height="5.5" rx=".9"/><rect x="14.2" y="26" width="1.8" height="5.5" rx=".9"/><rect x="6" y="33" width="2" height="2.5"/><rect x="10" y="33" width="2" height="2.5"/></g>
<g><rect x="2" y="39" width="12" height="10" fill="#f87010"/><path d="M6 41v6l5-3z" fill="#191919"/><path d="M4 51h12v-10" fill="none" stroke="#f87010" stroke-width="1.5"/></g>
<g fill="#f87010"><path d="M9 56l5 4.5-5 4.5-5-4.5z"/><path d="M2 64v5h14v-5h-2v3h-10v-3z"/></g>
<g><circle cx="7" cy="79" r="3.6" fill="none" stroke="#f87010" stroke-width="2"/><path d="M9.8 82l5 5" stroke="#f87010" stroke-width="2.6"/></g>
<g><path d="M4 93l11 11" stroke="#f87010" stroke-width="3.2"/><path d="M3 91l3 3" stroke="#f87010" stroke-width="1.5"/><path d="M2 101l4 4M6 101l-4 4" stroke="#f87010" stroke-width="1.2"/></g>
</svg><div style="left:781px;top:995px;width:4px;height:1px;background:#555;"></div>
<div style="left:781px;top:998px;width:4px;height:1px;background:#555;"></div>
<div style="left:781px;top:1001px;width:4px;height:1px;background:#555;"></div>
<div style="left:787px;top:836.5px;width:613px;height:23.5px;background:linear-gradient(#7d6d6a 0%,#8f7e7b 35%,#8a7976 50%,#7e6e6b 55%,#86757280 100%),#857471;border-top:1px solid #5a4e4c;border-bottom:1px solid #4e4442;"></div>
<div style="left:787px;top:838px;height:22px;line-height:22px;width:100px;text-align:center;color:#ece4e2;font-size:12px;">Artist</div>
<div style="left:886px;top:842px;width:1px;height:15px;background:#5e5350;"></div>
<div style="left:887px;top:842px;width:1px;height:15px;background:#9a8a87;"></div>
<div style="left:886px;top:838px;height:22px;line-height:22px;width:100px;text-align:center;color:#ece4e2;font-size:12px;">Title</div>
<div style="left:985px;top:842px;width:1px;height:15px;background:#5e5350;"></div>
<div style="left:986px;top:842px;width:1px;height:15px;background:#9a8a87;"></div>
<div style="left:986px;top:838px;height:22px;line-height:22px;width:100px;text-align:center;color:#ece4e2;font-size:12px;">Album</div>
<div style="left:1085px;top:842px;width:1px;height:15px;background:#5e5350;"></div>
<div style="left:1086px;top:842px;width:1px;height:15px;background:#9a8a87;"></div>
<div style="left:1086px;top:838px;height:22px;line-height:22px;width:100px;text-align:center;color:#ece4e2;font-size:12px;">Year</div>
<div style="left:1185px;top:842px;width:1px;height:15px;background:#5e5350;"></div>
<div style="left:1186px;top:842px;width:1px;height:15px;background:#9a8a87;"></div>
<div style="left:1186px;top:838px;height:22px;line-height:22px;width:100px;text-align:center;color:#ece4e2;font-size:12px;">Duration</div>
<div style="left:1285px;top:842px;width:1px;height:15px;background:#5e5350;"></div>
<div style="left:1286px;top:842px;width:1px;height:15px;background:#9a8a87;"></div>
<div style="left:1286px;top:838px;height:22px;line-height:22px;width:100px;text-align:center;color:#ece4e2;font-size:12px;">Genre</div>
<div style="left:1385px;top:842px;width:1px;height:15px;background:#5e5350;"></div>
<div style="left:1386px;top:842px;width:1px;height:15px;background:#9a8a87;"></div>
<div style="left:890px;top:861px;height:20px;line-height:20px;color:#d6d6d6;font-size:12px;">eisbox_life-ra...</div>
<div style="left:1190px;top:861px;height:20px;line-height:20px;color:#d6d6d6;font-size:12px;">0:31</div>
<div style="left:1390px;top:861px;height:20px;line-height:20px;color:#d6d6d6;font-size:12px;">ai</div>
<div style="left:790px;top:881px;height:20px;line-height:20px;color:#d6d6d6;font-size:12px;">Dorninger</div>
<div style="left:890px;top:881px;height:20px;line-height:20px;color:#d6d6d6;font-size:12px;">h20 water su...</div>
<div style="left:1090px;top:881px;height:20px;line-height:20px;color:#d6d6d6;font-size:12px;">2010</div>
<div style="left:1190px;top:881px;height:20px;line-height:20px;color:#d6d6d6;font-size:12px;">27:46</div>
<div style="left:1290px;top:881px;height:20px;line-height:20px;color:#d6d6d6;font-size:12px;">Soundtrack</div>
<div style="left:1390px;top:881px;height:20px;line-height:20px;color:#d6d6d6;font-size:12px;">m</div>
<div style="left:890px;top:901px;height:20px;line-height:20px;color:#d6d6d6;font-size:12px;">loten-namlin...</div>
<div style="left:1190px;top:901px;height:20px;line-height:20px;color:#d6d6d6;font-size:12px;">3:45</div>
<div style="left:1390px;top:901px;height:20px;line-height:20px;color:#d6d6d6;font-size:12px;">w</div>
<div style="left:890px;top:921px;height:20px;line-height:20px;color:#d6d6d6;font-size:12px;">loten-namlin...</div>
<div style="left:1190px;top:921px;height:20px;line-height:20px;color:#d6d6d6;font-size:12px;">3:45</div>
<div style="left:1390px;top:921px;height:20px;line-height:20px;color:#d6d6d6;font-size:12px;">w</div>
<div style="left:890px;top:941px;height:20px;line-height:20px;color:#d6d6d6;font-size:12px;">jkn-R</div>
<div style="left:1190px;top:941px;height:20px;line-height:20px;color:#d6d6d6;font-size:12px;">4:44</div>
<div style="left:1390px;top:941px;height:20px;line-height:20px;color:#d6d6d6;font-size:12px;">w</div>
<div style="left:890px;top:961px;height:20px;line-height:20px;color:#d6d6d6;font-size:12px;">jkn-L</div>
<div style="left:1190px;top:961px;height:20px;line-height:20px;color:#d6d6d6;font-size:12px;">4:44</div>
<div style="left:1390px;top:961px;height:20px;line-height:20px;color:#d6d6d6;font-size:12px;">w</div>
<div style="left:890px;top:981px;height:20px;line-height:20px;color:#d6d6d6;font-size:12px;">jkn-1%R</div>
<div style="left:1190px;top:981px;height:20px;line-height:20px;color:#d6d6d6;font-size:12px;">0:00</div>
<div style="left:1390px;top:981px;height:20px;line-height:20px;color:#d6d6d6;font-size:12px;">w</div>
<div style="left:890px;top:1001px;height:20px;line-height:20px;color:#d6d6d6;font-size:12px;">jkn-1%L</div>
<div style="left:1190px;top:1001px;height:20px;line-height:20px;color:#d6d6d6;font-size:12px;">0:00</div>
<div style="left:1390px;top:1001px;height:20px;line-height:20px;color:#d6d6d6;font-size:12px;">w</div>
<div style="left:590px;top:436px;width:554px;height:130px;background:#5c524f;border-radius:8px;border:1px solid #2e2826;"></div>
<div style="left:590px;top:436px;width:554px;height:24px;background:#5c524f;border-radius:7px 7px 0 0;border-top:1px solid #2e2826;box-sizing:border-box;border-radius:8px 8px 0 0;"></div>
<div style="left:1064.25px;top:442.25px;width:11.5px;height:11.5px;border:2px solid #8d807e;border-radius:50%;"></div>
<div style="left:1090.25px;top:442.25px;width:11.5px;height:11.5px;border:2px solid #8d807e;border-radius:50%;"></div>
<div style="left:1116.25px;top:442.25px;width:11.5px;height:11.5px;border:2px solid #8d807e;border-radius:50%;"></div>
<div style="left:592px;top:460px;width:550px;height:104px;background:#7b6b69;border-radius:0 0 6px 6px;"></div>
<div style="left:590px;top:436px;width:400px;height:129px;background:#7b6b69;border-radius:8px 0 0 8px;"></div>
<div class="qd" style="left:600px;top:466px;width:109px;height:25px;"></div>
<svg style="left:604px;top:471px" width="14" height="15" viewBox="0 0 14 15"><path d="M1.5 1.5v12l11-6z" fill="#8b7b78" stroke="#a59694" stroke-width="1"/></svg><div style="left:623px;top:466px;height:25px;line-height:25px;color:#a89a98;font-size:12px;"><u>S</u>tart</div>
<div class="qb" style="left:600px;top:498px;width:109px;height:25px;"></div>
<svg style="left:603px;top:503px" width="17" height="14" viewBox="0 0 17 14"><rect x="1.5" y="2" width="13" height="10" rx="1" fill="#7b6b74" stroke="#2458e8" stroke-width="1.5"/></svg><div style="left:623px;top:498px;height:25px;line-height:25px;color:#e2dad8;font-size:12px;"><u>M</u>eldungen...</div>
<div class="qb" style="left:600px;top:530px;width:109px;height:25px;"></div>
<svg style="left:603px;top:535px" width="17" height="14" viewBox="0 0 17 14"><path d="M1 3c5 0 7 8 14 8M1 11c5 0 7-8 14-8M1 7h14" fill="none" stroke="#e03c00" stroke-width="1.6"/></svg><div style="left:623px;top:530px;height:25px;line-height:25px;color:#e2dad8;font-size:12px;"><u>V</u>erbinden...</div>
<div class="qb" style="left:716px;top:466px;width:98px;height:25px;"></div>
<div style="left:721px;top:472px;width:12px;height:12px;background:#e00000;border:1px solid #a00;border-radius:1.5px;"></div>
<div style="left:739px;top:466px;height:25px;line-height:25px;color:#e2dad8;font-size:12px;">S<u>t</u>opp</div>
<div class="qb" style="left:716px;top:498px;width:98px;height:25px;"></div>
<svg style="left:719px;top:502px" width="17" height="17" viewBox="0 0 17 17"><path d="M0 9h3.5l1.5-6 2.5 12 2-9 1.5 3h5" fill="none" stroke="#1c54e0" stroke-width="1.4"/></svg><div style="left:739px;top:498px;height:25px;line-height:25px;color:#e2dad8;font-size:12px;">St<u>a</u>tus...</div>
<div style="left:716px;top:529px;width:98px;height:27px;background:linear-gradient(#6c5d5a,#66585a 50%,#625452);border:1px solid #4a403e;border-radius:3px;box-shadow:inset 0 1px 2px #4e4341;"></div>
<svg style="left:721px;top:536px" width="15" height="14" viewBox="0 0 15 14"><path d="M2 1.5v11M13 1.5v11M2 2l11 10M2 12l11-10" fill="none" stroke="#3a78f0" stroke-width="1.7"/></svg><div style="left:740px;top:531px;height:25px;line-height:25px;color:#e2dad8;font-size:12px;"><u>S</u>teckfeld...</div>
<div style="left:820px;top:465px;width:186px;height:58px;background:linear-gradient(115deg,#7a8286 0%,#30363a 5%,#1c2022 22%,#0a0c0c 45%,#000 62%);border:1px solid #463c3a;"></div>
<div style="left:824px;top:467px;height:17px;line-height:17px;color:#f0f000;font-size:13px;">Läuft</div>
<div style="left:886px;top:467px;height:17px;line-height:17px;color:#8c8c18;font-size:12px;">--</div>
<div style="left:905px;top:467px;height:17px;line-height:17px;color:#f0f000;font-size:13px;">49 %</div>
<div style="left:942px;top:467px;height:17px;line-height:17px;color:#8c8c18;font-size:13px;letter-spacing:-.2px;">48000 Hz</div>
<div style="left:824px;top:485px;height:18px;line-height:18px;color:#e8101c;font-size:13px;">83 (713</div>
<div style="left:903px;top:484.5px;height:20px;line-height:20px;color:#00f000;font-weight:bold;font-size:15.7px;width:100px;text-align:right;">00:00:02</div>
<div style="left:824px;top:503px;height:17px;line-height:17px;color:#00f000;font-size:13px;">Steht</div>
<div style="left:890px;top:503px;height:17px;line-height:17px;color:#00e000;font-size:13px;">120</div>
<div style="left:903px;top:503px;height:19px;line-height:19px;color:#00f000;font-weight:bold;font-size:13px;width:100px;text-align:right;">2:2.1746</div>
<div class="qb" style="left:821px;top:530px;width:30.5px;height:25px;"><svg style="left:6px;top:3px" width="16" height="16" viewBox="0 0 16 16"><rect x="2" y="2" width="2.6" height="12" fill="#0038f8" stroke="#0020a0" stroke-width=".8" stroke-linejoin="round"/><path d="M14 2v12l-9.5-6z" fill="#0038f8" stroke="#0020a0" stroke-width=".8" stroke-linejoin="round"/></svg></div>
<div class="qb" style="left:859px;top:530px;width:30.5px;height:25px;"><svg style="left:6px;top:3px" width="16" height="16" viewBox="0 0 16 16"><path d="M7 1.5L2 8l5.5 6.5V11l-2.5-3 2.5-3z" fill="#0038f8" stroke="#0020a0" stroke-width=".8" stroke-linejoin="round"/><path d="M14 1.5L8 8l5.5 6.5V11l-2.5-3 2.5-3z" fill="#0038f8" stroke="#0020a0" stroke-width=".8" stroke-linejoin="round"/></svg></div>
<div class="qb" style="left:897px;top:530px;width:30.5px;height:25px;"><svg style="left:6px;top:3px" width="16" height="16" viewBox="0 0 16 16"><path d="M3 2v12l11-6z" fill="#0038f8" stroke="#0020a0" stroke-width=".8" stroke-linejoin="round"/></svg></div>
<div class="qd" style="left:935px;top:530px;width:30.5px;height:25px;"><svg style="left:6px;top:3px" width="16" height="16" viewBox="0 0 16 16"><rect x="4" y="3" width="3" height="10" fill="#8a7a77"/><rect x="9.5" y="3" width="3" height="10" fill="#8a7a77"/></svg></div>
<div class="qb" style="left:973px;top:530px;width:30.5px;height:25px;"><svg style="left:6px;top:3px" width="16" height="16" viewBox="0 0 16 16"><path d="M2 1.5L7 8l-5.5 6.5V11l2.5-3-2.5-3z" fill="#0038f8" stroke="#0020a0" stroke-width=".8" stroke-linejoin="round"/><path d="M8 1.5L14 8l-5.5 6.5V11l2.5-3-2.5-3z" fill="#0038f8" stroke="#0020a0" stroke-width=".8" stroke-linejoin="round"/></svg></div>
<div class="qb" style="left:1012px;top:466px;width:123px;height:25px;"></div>
<svg style="left:1016px;top:471px" width="15" height="15" viewBox="0 0 15 15"><path d="M2 2l11 11M13 2l-11 11" stroke="#e00010" stroke-width="3.2"/></svg><div style="left:1035px;top:466px;height:25px;line-height:25px;color:#e2dad8;font-size:12px;"><u>B</u>eenden</div>
<div class="qb" style="left:1012px;top:498px;width:123px;height:25px;"></div>
<svg style="left:1015px;top:502px" width="17" height="17" viewBox="0 0 17 17"><circle cx="8.5" cy="8.5" r="6.8" fill="#a83810" stroke="#f05018" stroke-width="1.5"/><path d="M5 12l3.5-3.5a2.8 2.8 0 1 1 1.5 1.5" fill="none" stroke="#ff7038" stroke-width="1.6"/></svg><div style="left:1035px;top:498px;height:25px;line-height:25px;color:#e2dad8;font-size:12px;">Konfi<u>g</u>uration...</div>
<div class="qb" style="left:1012px;top:530px;width:123px;height:25px;"></div>
<svg style="left:1015px;top:534px" width="17" height="17" viewBox="0 0 17 17"><circle cx="8.5" cy="8.5" r="6.8" fill="#7872a4" stroke="#2458f0" stroke-width="1.5"/><text x="8.5" y="12.5" font-family="DejaVu Serif, Liberation Serif, serif" font-weight="bold" font-size="10.5" fill="#1238c8" text-anchor="middle">i</text></svg><div style="left:1035px;top:530px;height:25px;line-height:25px;color:#e2dad8;font-size:12px;"><u>Ü</u>ber...</div>
<div style="left:0px;top:1025px;width:1400px;height:25px;background:linear-gradient(#4a4a4a 0%,#2e2e2e 15%,#181818 60%,#101010 100%);border-top:1px solid #000;"></div>
<div style="left:2px;top:1028px;width:20px;height:20px;background:linear-gradient(#8a7a77,#6a5c5a);border:1px solid #3a3230;border-radius:3px;"><svg style="left:2px;top:3px" width="15" height="12" viewBox="0 0 15 12"><rect x=".5" y=".5" width="14" height="10" rx="1" fill="#5a8ad8" stroke="#dfe8f8"/><rect x="2" y="6" width="11" height="3.5" fill="#e8eef8"/></svg></div>
<div style="left:26px;top:1034px;width:4px;height:1px;background:#999;"></div>
<div style="left:26px;top:1037px;width:4px;height:1px;background:#999;"></div>
<div style="left:26px;top:1040px;width:4px;height:1px;background:#999;"></div>
<div class="tk" style="left:36px;top:1027px;width:150px;height:23px;border-bottom:none;border-radius:3px 3px 0 0;"><svg style="left:8px;top:3px" width="18" height="18" viewBox="0 0 18 18"><path d="M2 2l3 1 9 10-2 2-9-10z" fill="#c8b870" stroke="#3a3420" stroke-width=".8"/><path d="M13 13l3 3" stroke="#222" stroke-width="2"/></svg></div>
<div style="left:65px;top:1027px;height:22px;line-height:22px;color:#e6dedc;font-size:12px;white-space:pre;">JACK Audio Conn...</div>
<div class="tk" style="left:188px;top:1027px;width:150px;height:23px;border-bottom:none;border-radius:3px 3px 0 0;"><svg style="left:8px;top:5px" width="17" height="14" viewBox="0 0 15 14"><path d="M2 1.5v11M13 1.5v11M2 2l11 10M2 12l11-10" fill="none" stroke="#1c54e0" stroke-width="1.8"/></svg></div>
<div style="left:220px;top:1027px;height:22px;line-height:22px;color:#e6dedc;font-size:12px;white-space:pre;">Steckfeld - JACK ...</div>
<div class="tk" style="left:341px;top:1027px;width:150px;height:23px;border-bottom:none;border-radius:3px 3px 0 0;"><svg style="left:7px;top:3px" width="20" height="18" viewBox="0 0 20 18"><path d="M10 1.5L19 16.5h-18z" fill="#d41414" stroke="#7a0808" stroke-width=".8"/><path d="M10 6l4 8h-8z" fill="#f05a4a"/></svg></div>
<div style="left:373px;top:1027px;height:22px;line-height:22px;color:#e6dedc;font-size:12px;white-space:pre;">test1 - Ardour</div>
<div class="tk" style="left:494px;top:1027px;width:150px;height:23px;border-bottom:none;border-radius:3px 3px 0 0;"><svg style="left:9px;top:5px" width="16" height="14" viewBox="0 0 16 14"><rect x=".5" y=".5" width="15" height="13" fill="#eef2f6" stroke="#8a9098"/><rect x="1" y="1" width="14" height="3.5" fill="#3c6cc0"/></svg></div>
<div style="left:526px;top:1027px;height:22px;line-height:22px;color:#e6dedc;font-size:12px;white-space:pre;">Pd</div>
<div class="tk" style="left:647px;top:1027px;width:150px;height:23px;border-bottom:none;border-radius:3px 3px 0 0;"><svg style="left:9px;top:5px" width="16" height="14" viewBox="0 0 16 14"><rect x=".5" y=".5" width="15" height="13" fill="#eef2f6" stroke="#8a9098"/><rect x="1" y="1" width="14" height="3.5" fill="#3c6cc0"/></svg></div>
<div style="left:679px;top:1027px;height:22px;line-height:22px;color:#e6dedc;font-size:12px;white-space:pre;">player2.pd  - /ho...</div>
<div class="tk" style="left:801px;top:1027px;width:150px;height:23px;border-bottom:none;border-radius:3px 3px 0 0;"><svg style="left:9px;top:5px" width="16" height="14" viewBox="0 0 16 14"><rect x=".5" y=".5" width="15" height="13" fill="#eef2f6" stroke="#8a9098"/><rect x="1" y="1" width="14" height="3.5" fill="#3c6cc0"/></svg></div>
<div style="left:833px;top:1027px;height:22px;line-height:22px;color:#e6dedc;font-size:12px;white-space:pre;">Virtual Keyboard</div>
<div class="tk" style="left:955px;top:1027px;width:150px;height:23px;background:linear-gradient(#8b7a78 0%,#857471 50%,#7e6e6b 52%,#827270 100%);box-shadow:inset 0 1px 2px #5a4e4c;border-bottom:none;border-radius:3px 3px 0 0;"><svg style="left:8px;top:3px" width="18" height="18" viewBox="0 0 18 18"><rect x=".5" y=".5" width="17" height="17" fill="#e4e0dc" stroke="#5a5250"/><rect x="5" y="3" width="8" height="7" fill="#222"/><rect x="7" y="5" width="4" height="4" fill="#e02020"/><rect x="3" y="13" width="12" height="2" fill="#444"/></svg></div>
<div style="left:987px;top:1027px;height:22px;line-height:22px;color:#e6dedc;font-size:12px;white-space:pre;">Mixxx 1.8.0</div>
<div class="tk" style="left:1108px;top:1027px;width:150px;height:23px;border-bottom:none;border-radius:3px 3px 0 0;"><svg style="left:8px;top:3px" width="20" height="19" viewBox="0 0 20 19"><rect x="5.5" y="1.5" width="13" height="11" fill="#e8eef6" stroke="#3a4450"/><rect x="6" y="2" width="12" height="3" fill="#3c6cc0"/><rect x="1.5" y="8.5" width="12" height="9" rx="1" fill="#444" stroke="#ddd"/><circle cx="7.5" cy="13" r="2.6" fill="#222" stroke="#ccc"/></svg></div>
<div style="left:1140px;top:1027px;height:22px;line-height:22px;color:#e6dedc;font-size:12px;white-space:pre;">Bildschirmfoto a...</div>
<svg style="left:1265px;top:1027px" width="22" height="22" viewBox="0 0 22 22"><path d="M3 6h16l-2 15h-12z" fill="#c8c8c8" stroke="#555" stroke-width="1"/><path d="M2 3.5h18v3h-18z" fill="#e4e4e4" stroke="#555" stroke-width=".8"/><circle cx="11" cy="13.5" r="4" fill="none" stroke="#444" stroke-width="1.4" stroke-dasharray="3 1.5"/><path d="M6 2l3-1.5 4 1 3-1" fill="none" stroke="#aaa" stroke-width="1.2"/></svg><div style="left:1290px;top:1027px;width:110px;height:23px;background:#1c1c1c;border:1px solid #000;"></div>
<div style="left:1291px;top:1028px;width:27px;height:22px;background:#2a96e8;"></div>
<div style="left:1292px;top:1033px;width:15px;height:8px;border:1px solid #e8f2fc;border-top:2px solid #e8f2fc;"></div>
<div style="left:1304px;top:1029px;width:13px;height:9px;background:#2a96e8;border:1px solid #e8f2fc;border-top:2px solid #e8f2fc;"></div>
<div style="left:1292px;top:1042px;width:14px;height:8px;border:1px solid #e8f2fc;border-top:2px solid #e8f2fc;"></div>
<div style="left:1306px;top:1040px;width:12px;height:10px;background:#2a96e8;border:1px solid #e8f2fc;border-top:2px solid #e8f2fc;"></div>
<div style="left:1318px;top:1028px;width:1px;height:22px;background:#3a3a3a;"></div>
<div style="left:1345px;top:1028px;width:1px;height:22px;background:#3a3a3a;"></div>
<div style="left:1372px;top:1028px;width:1px;height:22px;background:#3a3a3a;"></div>
<svg style="left:868px;top:655px" width="14" height="20" viewBox="0 0 14 20"><path d="M1 1v15l3.5-3.5 2.5 6 2.5-1-2.5-6h5z" fill="#000" stroke="#fff" stroke-width="1.2"/></svg></body></html>
